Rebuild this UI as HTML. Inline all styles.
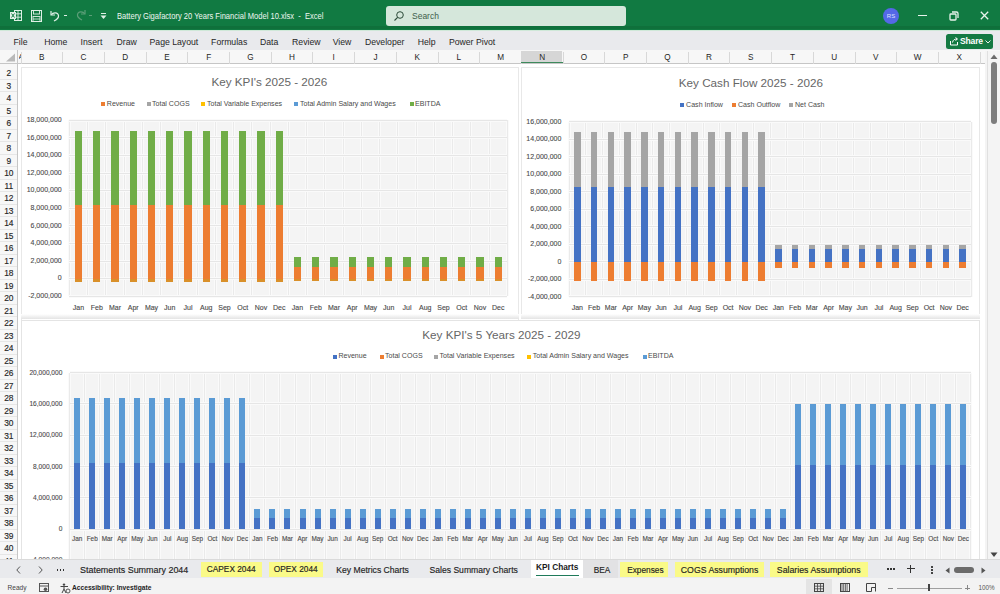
<!DOCTYPE html><html><head><meta charset="utf-8"><style>
html,body{margin:0;padding:0;width:1000px;height:594px;overflow:hidden;background:#fff;font-family:"Liberation Sans", sans-serif;}
div{box-sizing:border-box}
</style></head><body><div style="position:relative;width:1000px;height:594px;overflow:hidden">
<div style="position:absolute;left:0.00px;top:0.00px;width:1000.00px;height:30.50px;background:#117a42"></div>
<div style="position:absolute;left:0.00px;top:26.30px;width:1000.00px;height:2.70px;background:#0f703b"></div>
<div style="position:absolute;left:0.00px;top:29.80px;width:1000.00px;height:1.00px;background:#cfe8d8"></div>
<svg style="position:absolute;left:10px;top:10px" width="12" height="11" viewBox="0 0 12 11">
<rect x="4.5" y="0.5" width="7" height="10" fill="none" stroke="#dff0e6" stroke-width="1"/>
<line x1="8" y1="0.5" x2="8" y2="10.5" stroke="#dff0e6" stroke-width="0.9"/>
<line x1="4.5" y1="3.8" x2="11.5" y2="3.8" stroke="#dff0e6" stroke-width="0.9"/>
<line x1="4.5" y1="7.2" x2="11.5" y2="7.2" stroke="#dff0e6" stroke-width="0.9"/>
<rect x="0" y="2" width="6" height="7" fill="#dff0e6"/>
<path d="M1.5 3.5 L4.5 7.5 M4.5 3.5 L1.5 7.5" stroke="#117a42" stroke-width="1"/>
</svg>
<svg style="position:absolute;left:31px;top:10px" width="11" height="12" viewBox="0 0 11 12">
<rect x="0.5" y="0.5" width="10" height="11" fill="none" stroke="#dff0e6" stroke-width="1"/>
<rect x="2.5" y="0.5" width="6" height="3.5" fill="none" stroke="#dff0e6" stroke-width="0.9"/>
<rect x="2" y="6.5" width="7" height="5" fill="none" stroke="#dff0e6" stroke-width="0.9"/>
<line x1="2" y1="9" x2="9" y2="9" stroke="#dff0e6" stroke-width="0.8"/>
</svg>
<svg style="position:absolute;left:48px;top:9px" width="14" height="14" viewBox="0 0 14 14">
<path d="M3 2 L3 6 L7 6" fill="none" stroke="#dff0e6" stroke-width="1.2"/>
<path d="M3.3 5.8 C5 3 10 3 10.5 6.5 C11 9.5 8 11 6 12" fill="none" stroke="#dff0e6" stroke-width="1.2"/>
</svg>
<div style="position:absolute;left:64.00px;top:15.00px;width:3.00px;height:1.00px;background:#dff0e6"></div>
<svg style="position:absolute;left:74px;top:8px" width="14" height="14" viewBox="0 0 14 14">
<path d="M11 2 L11 6 L7 6" fill="none" stroke="#5c9e78" stroke-width="1.2"/>
<path d="M10.7 5.8 C9 3 4 3 3.5 6.5 C3 9.5 6 11 8 12" fill="none" stroke="#5c9e78" stroke-width="1.2"/>
</svg>
<div style="position:absolute;left:89.00px;top:15.00px;width:3.00px;height:1.00px;background:#5c9e78"></div>
<div style="position:absolute;left:101.00px;top:13.00px;width:5.00px;height:1.00px;background:#dff0e6"></div>
<svg style="position:absolute;left:100px;top:15px" width="7" height="5"><path d="M0.5 0.5 L6.5 0.5 L3.5 4 Z" fill="#dff0e6"/></svg>
<div style="position:absolute;left:117.00px;top:10.76px;height:10.08px;line-height:10.08px;font-size:8.4px;color:#eef7f1;white-space:nowrap;transform-origin:0 50%;transform:scaleX(0.903)">Battery Gigafactory 20 Years Financial Model 10.xlsx&nbsp; - &nbsp;Excel</div>
<div style="position:absolute;left:385.50px;top:6.00px;width:240.00px;height:20.30px;background:#d5e7db;border-radius:3px"></div>
<svg style="position:absolute;left:393px;top:10px" width="12" height="12" viewBox="0 0 12 12">
<circle cx="7" cy="5" r="3.3" fill="none" stroke="#2b4a38" stroke-width="1"/>
<line x1="4.6" y1="7.4" x2="1.5" y2="10.5" stroke="#2b4a38" stroke-width="1.1"/>
</svg>
<div style="position:absolute;left:412.00px;top:10.90px;height:10.20px;line-height:10.20px;font-size:8.5px;color:#3f5f4c;white-space:nowrap;">Search</div>
<div style="position:absolute;left:883px;top:7.5px;width:16px;height:16px;border-radius:50%;background:#5468e8;color:#dfe4ff;font-size:6px;line-height:16px;text-align:center">RS</div>
<div style="position:absolute;left:918.00px;top:14.60px;width:9.00px;height:1.40px;background:#e8f3ec"></div>
<svg style="position:absolute;left:948.5px;top:10.5px" width="10" height="10" viewBox="0 0 10 10">
<rect x="1" y="3" width="6" height="6" rx="0.8" fill="none" stroke="#e8f3ec" stroke-width="1.3"/>
<path d="M3 1 L7.5 1 Q9 1 9 2.5 L9 7" fill="none" stroke="#e8f3ec" stroke-width="1.3"/>
</svg>
<svg style="position:absolute;left:980px;top:11px" width="9" height="9" viewBox="0 0 9 9">
<path d="M0.8 0.8 L8.2 8.2 M8.2 0.8 L0.8 8.2" stroke="#e8f3ec" stroke-width="1.3"/>
</svg>
<div style="position:absolute;left:0.00px;top:30.50px;width:1000.00px;height:19.00px;background:#e9eaed"></div>
<div style="position:absolute;left:13.50px;top:37.18px;height:10.44px;line-height:10.44px;font-size:8.7px;color:#262626;white-space:nowrap;">File</div>
<div style="position:absolute;left:44.20px;top:37.18px;height:10.44px;line-height:10.44px;font-size:8.7px;color:#262626;white-space:nowrap;">Home</div>
<div style="position:absolute;left:80.60px;top:37.18px;height:10.44px;line-height:10.44px;font-size:8.7px;color:#262626;white-space:nowrap;">Insert</div>
<div style="position:absolute;left:116.50px;top:37.18px;height:10.44px;line-height:10.44px;font-size:8.7px;color:#262626;white-space:nowrap;">Draw</div>
<div style="position:absolute;left:149.50px;top:37.18px;height:10.44px;line-height:10.44px;font-size:8.7px;color:#262626;white-space:nowrap;">Page Layout</div>
<div style="position:absolute;left:211.10px;top:37.18px;height:10.44px;line-height:10.44px;font-size:8.7px;color:#262626;white-space:nowrap;">Formulas</div>
<div style="position:absolute;left:259.90px;top:37.18px;height:10.44px;line-height:10.44px;font-size:8.7px;color:#262626;white-space:nowrap;">Data</div>
<div style="position:absolute;left:292.10px;top:37.18px;height:10.44px;line-height:10.44px;font-size:8.7px;color:#262626;white-space:nowrap;">Review</div>
<div style="position:absolute;left:332.70px;top:37.18px;height:10.44px;line-height:10.44px;font-size:8.7px;color:#262626;white-space:nowrap;">View</div>
<div style="position:absolute;left:364.90px;top:37.18px;height:10.44px;line-height:10.44px;font-size:8.7px;color:#262626;white-space:nowrap;">Developer</div>
<div style="position:absolute;left:417.70px;top:37.18px;height:10.44px;line-height:10.44px;font-size:8.7px;color:#262626;white-space:nowrap;">Help</div>
<div style="position:absolute;left:448.90px;top:37.18px;height:10.44px;line-height:10.44px;font-size:8.7px;color:#262626;white-space:nowrap;">Power Pivot</div>
<div style="position:absolute;left:946.00px;top:33.50px;width:46.50px;height:15.00px;background:#147a43;border-radius:2.5px"></div>
<svg style="position:absolute;left:949px;top:36px" width="10" height="10" viewBox="0 0 10 10">
<path d="M1.5 5 L1.5 9 L8.5 9 L8.5 6" fill="none" stroke="#fff" stroke-width="1"/>
<path d="M3.5 6.5 C4 3.5 6 3 8 3 M6.5 1.5 L8.5 3 L6.5 4.5" fill="none" stroke="#fff" stroke-width="1"/>
</svg>
<div style="position:absolute;left:960.00px;top:36.34px;height:10.32px;line-height:10.32px;font-size:8.6px;color:#ffffff;white-space:nowrap;font-weight:600;letter-spacing:-0.2px">Share</div>
<svg style="position:absolute;left:985px;top:40px" width="6" height="4"><path d="M0.5 0.5 L3 3 L5.5 0.5" fill="none" stroke="#fff" stroke-width="0.9"/></svg>
<div style="position:absolute;left:0.00px;top:49.50px;width:1000.00px;height:14.00px;background:#f7f7f7"></div>
<div style="position:absolute;left:0.00px;top:62.70px;width:985.00px;height:1.00px;background:#c6c6c6"></div>
<svg style="position:absolute;left:5px;top:53px" width="11" height="9"><path d="M10 0.5 L10 8.5 L1 8.5 Z" fill="#b9b9b9"/></svg>
<div style="position:absolute;left:17.20px;top:49.50px;width:1.00px;height:16.00px;background:#c6c6c6"></div>
<div style="position:absolute;left:18.50px;top:52.20px;height:9.60px;line-height:9.60px;font-size:8px;color:#333;white-space:nowrap;overflow:hidden;width:2.5px">A</div>
<div style="position:absolute;left:62.20px;top:51.50px;width:1.00px;height:12.00px;background:#d8d8d8"></div>
<div style="position:absolute;left:41.85px;top:53.08px;height:9.84px;line-height:9.84px;font-size:8.2px;color:#262626;white-space:nowrap;transform:translateX(-50%);">B</div>
<div style="position:absolute;left:103.90px;top:51.50px;width:1.00px;height:12.00px;background:#d8d8d8"></div>
<div style="position:absolute;left:83.55px;top:53.08px;height:9.84px;line-height:9.84px;font-size:8.2px;color:#262626;white-space:nowrap;transform:translateX(-50%);">C</div>
<div style="position:absolute;left:145.60px;top:51.50px;width:1.00px;height:12.00px;background:#d8d8d8"></div>
<div style="position:absolute;left:125.25px;top:53.08px;height:9.84px;line-height:9.84px;font-size:8.2px;color:#262626;white-space:nowrap;transform:translateX(-50%);">D</div>
<div style="position:absolute;left:187.30px;top:51.50px;width:1.00px;height:12.00px;background:#d8d8d8"></div>
<div style="position:absolute;left:166.95px;top:53.08px;height:9.84px;line-height:9.84px;font-size:8.2px;color:#262626;white-space:nowrap;transform:translateX(-50%);">E</div>
<div style="position:absolute;left:229.00px;top:51.50px;width:1.00px;height:12.00px;background:#d8d8d8"></div>
<div style="position:absolute;left:208.65px;top:53.08px;height:9.84px;line-height:9.84px;font-size:8.2px;color:#262626;white-space:nowrap;transform:translateX(-50%);">F</div>
<div style="position:absolute;left:270.70px;top:51.50px;width:1.00px;height:12.00px;background:#d8d8d8"></div>
<div style="position:absolute;left:250.35px;top:53.08px;height:9.84px;line-height:9.84px;font-size:8.2px;color:#262626;white-space:nowrap;transform:translateX(-50%);">G</div>
<div style="position:absolute;left:312.40px;top:51.50px;width:1.00px;height:12.00px;background:#d8d8d8"></div>
<div style="position:absolute;left:292.05px;top:53.08px;height:9.84px;line-height:9.84px;font-size:8.2px;color:#262626;white-space:nowrap;transform:translateX(-50%);">H</div>
<div style="position:absolute;left:354.10px;top:51.50px;width:1.00px;height:12.00px;background:#d8d8d8"></div>
<div style="position:absolute;left:333.75px;top:53.08px;height:9.84px;line-height:9.84px;font-size:8.2px;color:#262626;white-space:nowrap;transform:translateX(-50%);">I</div>
<div style="position:absolute;left:395.80px;top:51.50px;width:1.00px;height:12.00px;background:#d8d8d8"></div>
<div style="position:absolute;left:375.45px;top:53.08px;height:9.84px;line-height:9.84px;font-size:8.2px;color:#262626;white-space:nowrap;transform:translateX(-50%);">J</div>
<div style="position:absolute;left:437.50px;top:51.50px;width:1.00px;height:12.00px;background:#d8d8d8"></div>
<div style="position:absolute;left:417.15px;top:53.08px;height:9.84px;line-height:9.84px;font-size:8.2px;color:#262626;white-space:nowrap;transform:translateX(-50%);">K</div>
<div style="position:absolute;left:479.20px;top:51.50px;width:1.00px;height:12.00px;background:#d8d8d8"></div>
<div style="position:absolute;left:458.85px;top:53.08px;height:9.84px;line-height:9.84px;font-size:8.2px;color:#262626;white-space:nowrap;transform:translateX(-50%);">L</div>
<div style="position:absolute;left:520.90px;top:51.50px;width:1.00px;height:12.00px;background:#d8d8d8"></div>
<div style="position:absolute;left:500.55px;top:53.08px;height:9.84px;line-height:9.84px;font-size:8.2px;color:#262626;white-space:nowrap;transform:translateX(-50%);">M</div>
<div style="position:absolute;left:521.40px;top:50.80px;width:40.70px;height:12.70px;background:#d6d6d6"></div>
<div style="position:absolute;left:521.40px;top:61.70px;width:41.70px;height:1.60px;background:#3d8a5c"></div>
<div style="position:absolute;left:562.60px;top:51.50px;width:1.00px;height:12.00px;background:#d8d8d8"></div>
<div style="position:absolute;left:542.25px;top:53.08px;height:9.84px;line-height:9.84px;font-size:8.2px;color:#262626;white-space:nowrap;transform:translateX(-50%);">N</div>
<div style="position:absolute;left:604.30px;top:51.50px;width:1.00px;height:12.00px;background:#d8d8d8"></div>
<div style="position:absolute;left:583.95px;top:53.08px;height:9.84px;line-height:9.84px;font-size:8.2px;color:#262626;white-space:nowrap;transform:translateX(-50%);">O</div>
<div style="position:absolute;left:646.00px;top:51.50px;width:1.00px;height:12.00px;background:#d8d8d8"></div>
<div style="position:absolute;left:625.65px;top:53.08px;height:9.84px;line-height:9.84px;font-size:8.2px;color:#262626;white-space:nowrap;transform:translateX(-50%);">P</div>
<div style="position:absolute;left:687.70px;top:51.50px;width:1.00px;height:12.00px;background:#d8d8d8"></div>
<div style="position:absolute;left:667.35px;top:53.08px;height:9.84px;line-height:9.84px;font-size:8.2px;color:#262626;white-space:nowrap;transform:translateX(-50%);">Q</div>
<div style="position:absolute;left:729.40px;top:51.50px;width:1.00px;height:12.00px;background:#d8d8d8"></div>
<div style="position:absolute;left:709.05px;top:53.08px;height:9.84px;line-height:9.84px;font-size:8.2px;color:#262626;white-space:nowrap;transform:translateX(-50%);">R</div>
<div style="position:absolute;left:771.10px;top:51.50px;width:1.00px;height:12.00px;background:#d8d8d8"></div>
<div style="position:absolute;left:750.75px;top:53.08px;height:9.84px;line-height:9.84px;font-size:8.2px;color:#262626;white-space:nowrap;transform:translateX(-50%);">S</div>
<div style="position:absolute;left:812.80px;top:51.50px;width:1.00px;height:12.00px;background:#d8d8d8"></div>
<div style="position:absolute;left:792.45px;top:53.08px;height:9.84px;line-height:9.84px;font-size:8.2px;color:#262626;white-space:nowrap;transform:translateX(-50%);">T</div>
<div style="position:absolute;left:854.50px;top:51.50px;width:1.00px;height:12.00px;background:#d8d8d8"></div>
<div style="position:absolute;left:834.15px;top:53.08px;height:9.84px;line-height:9.84px;font-size:8.2px;color:#262626;white-space:nowrap;transform:translateX(-50%);">U</div>
<div style="position:absolute;left:896.20px;top:51.50px;width:1.00px;height:12.00px;background:#d8d8d8"></div>
<div style="position:absolute;left:875.85px;top:53.08px;height:9.84px;line-height:9.84px;font-size:8.2px;color:#262626;white-space:nowrap;transform:translateX(-50%);">V</div>
<div style="position:absolute;left:937.90px;top:51.50px;width:1.00px;height:12.00px;background:#d8d8d8"></div>
<div style="position:absolute;left:917.55px;top:53.08px;height:9.84px;line-height:9.84px;font-size:8.2px;color:#262626;white-space:nowrap;transform:translateX(-50%);">W</div>
<div style="position:absolute;left:979.60px;top:51.50px;width:1.00px;height:12.00px;background:#d8d8d8"></div>
<div style="position:absolute;left:959.25px;top:53.08px;height:9.84px;line-height:9.84px;font-size:8.2px;color:#262626;white-space:nowrap;transform:translateX(-50%);">X</div>
<div style="position:absolute;left:20.50px;top:51.50px;width:0.80px;height:12.00px;background:#d8d8d8"></div>
<div style="position:absolute;left:0.00px;top:63.50px;width:17.50px;height:495.50px;background:#f7f7f7"></div>
<div style="position:absolute;left:17.20px;top:63.50px;width:1.00px;height:495.50px;background:#c6c6c6"></div>
<div style="position:absolute;left:0.00px;top:78.50px;width:17.00px;height:0.80px;background:#e6e6e6"></div>
<div style="position:absolute;left:8.80px;top:68.41px;height:10.08px;line-height:10.08px;font-size:8.4px;color:#262626;white-space:nowrap;transform:translateX(-50%);-webkit-text-stroke:0.15px #262626">2</div>
<div style="position:absolute;left:0.00px;top:91.00px;width:17.00px;height:0.80px;background:#e6e6e6"></div>
<div style="position:absolute;left:8.80px;top:80.91px;height:10.08px;line-height:10.08px;font-size:8.4px;color:#262626;white-space:nowrap;transform:translateX(-50%);-webkit-text-stroke:0.15px #262626">3</div>
<div style="position:absolute;left:0.00px;top:103.50px;width:17.00px;height:0.80px;background:#e6e6e6"></div>
<div style="position:absolute;left:8.80px;top:93.41px;height:10.08px;line-height:10.08px;font-size:8.4px;color:#262626;white-space:nowrap;transform:translateX(-50%);-webkit-text-stroke:0.15px #262626">4</div>
<div style="position:absolute;left:0.00px;top:116.00px;width:17.00px;height:0.80px;background:#e6e6e6"></div>
<div style="position:absolute;left:8.80px;top:105.91px;height:10.08px;line-height:10.08px;font-size:8.4px;color:#262626;white-space:nowrap;transform:translateX(-50%);-webkit-text-stroke:0.15px #262626">5</div>
<div style="position:absolute;left:0.00px;top:128.50px;width:17.00px;height:0.80px;background:#e6e6e6"></div>
<div style="position:absolute;left:8.80px;top:118.41px;height:10.08px;line-height:10.08px;font-size:8.4px;color:#262626;white-space:nowrap;transform:translateX(-50%);-webkit-text-stroke:0.15px #262626">6</div>
<div style="position:absolute;left:0.00px;top:141.00px;width:17.00px;height:0.80px;background:#e6e6e6"></div>
<div style="position:absolute;left:8.80px;top:130.91px;height:10.08px;line-height:10.08px;font-size:8.4px;color:#262626;white-space:nowrap;transform:translateX(-50%);-webkit-text-stroke:0.15px #262626">7</div>
<div style="position:absolute;left:0.00px;top:153.50px;width:17.00px;height:0.80px;background:#e6e6e6"></div>
<div style="position:absolute;left:8.80px;top:143.41px;height:10.08px;line-height:10.08px;font-size:8.4px;color:#262626;white-space:nowrap;transform:translateX(-50%);-webkit-text-stroke:0.15px #262626">8</div>
<div style="position:absolute;left:0.00px;top:166.00px;width:17.00px;height:0.80px;background:#e6e6e6"></div>
<div style="position:absolute;left:8.80px;top:155.91px;height:10.08px;line-height:10.08px;font-size:8.4px;color:#262626;white-space:nowrap;transform:translateX(-50%);-webkit-text-stroke:0.15px #262626">9</div>
<div style="position:absolute;left:0.00px;top:178.50px;width:17.00px;height:0.80px;background:#e6e6e6"></div>
<div style="position:absolute;left:8.80px;top:168.41px;height:10.08px;line-height:10.08px;font-size:8.4px;color:#262626;white-space:nowrap;transform:translateX(-50%);-webkit-text-stroke:0.15px #262626">10</div>
<div style="position:absolute;left:0.00px;top:191.00px;width:17.00px;height:0.80px;background:#e6e6e6"></div>
<div style="position:absolute;left:8.80px;top:180.91px;height:10.08px;line-height:10.08px;font-size:8.4px;color:#262626;white-space:nowrap;transform:translateX(-50%);-webkit-text-stroke:0.15px #262626">11</div>
<div style="position:absolute;left:0.00px;top:203.50px;width:17.00px;height:0.80px;background:#e6e6e6"></div>
<div style="position:absolute;left:8.80px;top:193.41px;height:10.08px;line-height:10.08px;font-size:8.4px;color:#262626;white-space:nowrap;transform:translateX(-50%);-webkit-text-stroke:0.15px #262626">12</div>
<div style="position:absolute;left:0.00px;top:216.00px;width:17.00px;height:0.80px;background:#e6e6e6"></div>
<div style="position:absolute;left:8.80px;top:205.91px;height:10.08px;line-height:10.08px;font-size:8.4px;color:#262626;white-space:nowrap;transform:translateX(-50%);-webkit-text-stroke:0.15px #262626">13</div>
<div style="position:absolute;left:0.00px;top:228.50px;width:17.00px;height:0.80px;background:#e6e6e6"></div>
<div style="position:absolute;left:8.80px;top:218.41px;height:10.08px;line-height:10.08px;font-size:8.4px;color:#262626;white-space:nowrap;transform:translateX(-50%);-webkit-text-stroke:0.15px #262626">14</div>
<div style="position:absolute;left:0.00px;top:241.00px;width:17.00px;height:0.80px;background:#e6e6e6"></div>
<div style="position:absolute;left:8.80px;top:230.91px;height:10.08px;line-height:10.08px;font-size:8.4px;color:#262626;white-space:nowrap;transform:translateX(-50%);-webkit-text-stroke:0.15px #262626">15</div>
<div style="position:absolute;left:0.00px;top:253.50px;width:17.00px;height:0.80px;background:#e6e6e6"></div>
<div style="position:absolute;left:8.80px;top:243.41px;height:10.08px;line-height:10.08px;font-size:8.4px;color:#262626;white-space:nowrap;transform:translateX(-50%);-webkit-text-stroke:0.15px #262626">16</div>
<div style="position:absolute;left:0.00px;top:266.00px;width:17.00px;height:0.80px;background:#e6e6e6"></div>
<div style="position:absolute;left:8.80px;top:255.91px;height:10.08px;line-height:10.08px;font-size:8.4px;color:#262626;white-space:nowrap;transform:translateX(-50%);-webkit-text-stroke:0.15px #262626">17</div>
<div style="position:absolute;left:0.00px;top:278.50px;width:17.00px;height:0.80px;background:#e6e6e6"></div>
<div style="position:absolute;left:8.80px;top:268.41px;height:10.08px;line-height:10.08px;font-size:8.4px;color:#262626;white-space:nowrap;transform:translateX(-50%);-webkit-text-stroke:0.15px #262626">18</div>
<div style="position:absolute;left:0.00px;top:291.00px;width:17.00px;height:0.80px;background:#e6e6e6"></div>
<div style="position:absolute;left:8.80px;top:280.91px;height:10.08px;line-height:10.08px;font-size:8.4px;color:#262626;white-space:nowrap;transform:translateX(-50%);-webkit-text-stroke:0.15px #262626">19</div>
<div style="position:absolute;left:0.00px;top:303.50px;width:17.00px;height:0.80px;background:#e6e6e6"></div>
<div style="position:absolute;left:8.80px;top:293.41px;height:10.08px;line-height:10.08px;font-size:8.4px;color:#262626;white-space:nowrap;transform:translateX(-50%);-webkit-text-stroke:0.15px #262626">20</div>
<div style="position:absolute;left:0.00px;top:316.00px;width:17.00px;height:0.80px;background:#e6e6e6"></div>
<div style="position:absolute;left:8.80px;top:305.91px;height:10.08px;line-height:10.08px;font-size:8.4px;color:#262626;white-space:nowrap;transform:translateX(-50%);-webkit-text-stroke:0.15px #262626">21</div>
<div style="position:absolute;left:0.00px;top:328.50px;width:17.00px;height:0.80px;background:#e6e6e6"></div>
<div style="position:absolute;left:8.80px;top:318.41px;height:10.08px;line-height:10.08px;font-size:8.4px;color:#262626;white-space:nowrap;transform:translateX(-50%);-webkit-text-stroke:0.15px #262626">22</div>
<div style="position:absolute;left:0.00px;top:341.00px;width:17.00px;height:0.80px;background:#e6e6e6"></div>
<div style="position:absolute;left:8.80px;top:330.91px;height:10.08px;line-height:10.08px;font-size:8.4px;color:#262626;white-space:nowrap;transform:translateX(-50%);-webkit-text-stroke:0.15px #262626">23</div>
<div style="position:absolute;left:0.00px;top:353.50px;width:17.00px;height:0.80px;background:#e6e6e6"></div>
<div style="position:absolute;left:8.80px;top:343.41px;height:10.08px;line-height:10.08px;font-size:8.4px;color:#262626;white-space:nowrap;transform:translateX(-50%);-webkit-text-stroke:0.15px #262626">24</div>
<div style="position:absolute;left:0.00px;top:366.00px;width:17.00px;height:0.80px;background:#e6e6e6"></div>
<div style="position:absolute;left:8.80px;top:355.91px;height:10.08px;line-height:10.08px;font-size:8.4px;color:#262626;white-space:nowrap;transform:translateX(-50%);-webkit-text-stroke:0.15px #262626">25</div>
<div style="position:absolute;left:0.00px;top:378.50px;width:17.00px;height:0.80px;background:#e6e6e6"></div>
<div style="position:absolute;left:8.80px;top:368.41px;height:10.08px;line-height:10.08px;font-size:8.4px;color:#262626;white-space:nowrap;transform:translateX(-50%);-webkit-text-stroke:0.15px #262626">26</div>
<div style="position:absolute;left:0.00px;top:391.00px;width:17.00px;height:0.80px;background:#e6e6e6"></div>
<div style="position:absolute;left:8.80px;top:380.91px;height:10.08px;line-height:10.08px;font-size:8.4px;color:#262626;white-space:nowrap;transform:translateX(-50%);-webkit-text-stroke:0.15px #262626">27</div>
<div style="position:absolute;left:0.00px;top:403.50px;width:17.00px;height:0.80px;background:#e6e6e6"></div>
<div style="position:absolute;left:8.80px;top:393.41px;height:10.08px;line-height:10.08px;font-size:8.4px;color:#262626;white-space:nowrap;transform:translateX(-50%);-webkit-text-stroke:0.15px #262626">28</div>
<div style="position:absolute;left:0.00px;top:416.00px;width:17.00px;height:0.80px;background:#e6e6e6"></div>
<div style="position:absolute;left:8.80px;top:405.91px;height:10.08px;line-height:10.08px;font-size:8.4px;color:#262626;white-space:nowrap;transform:translateX(-50%);-webkit-text-stroke:0.15px #262626">29</div>
<div style="position:absolute;left:0.00px;top:428.50px;width:17.00px;height:0.80px;background:#e6e6e6"></div>
<div style="position:absolute;left:8.80px;top:418.41px;height:10.08px;line-height:10.08px;font-size:8.4px;color:#262626;white-space:nowrap;transform:translateX(-50%);-webkit-text-stroke:0.15px #262626">30</div>
<div style="position:absolute;left:0.00px;top:441.00px;width:17.00px;height:0.80px;background:#e6e6e6"></div>
<div style="position:absolute;left:8.80px;top:430.91px;height:10.08px;line-height:10.08px;font-size:8.4px;color:#262626;white-space:nowrap;transform:translateX(-50%);-webkit-text-stroke:0.15px #262626">31</div>
<div style="position:absolute;left:0.00px;top:453.50px;width:17.00px;height:0.80px;background:#e6e6e6"></div>
<div style="position:absolute;left:8.80px;top:443.41px;height:10.08px;line-height:10.08px;font-size:8.4px;color:#262626;white-space:nowrap;transform:translateX(-50%);-webkit-text-stroke:0.15px #262626">32</div>
<div style="position:absolute;left:0.00px;top:466.00px;width:17.00px;height:0.80px;background:#e6e6e6"></div>
<div style="position:absolute;left:8.80px;top:455.91px;height:10.08px;line-height:10.08px;font-size:8.4px;color:#262626;white-space:nowrap;transform:translateX(-50%);-webkit-text-stroke:0.15px #262626">33</div>
<div style="position:absolute;left:0.00px;top:478.50px;width:17.00px;height:0.80px;background:#e6e6e6"></div>
<div style="position:absolute;left:8.80px;top:468.41px;height:10.08px;line-height:10.08px;font-size:8.4px;color:#262626;white-space:nowrap;transform:translateX(-50%);-webkit-text-stroke:0.15px #262626">34</div>
<div style="position:absolute;left:0.00px;top:491.00px;width:17.00px;height:0.80px;background:#e6e6e6"></div>
<div style="position:absolute;left:8.80px;top:480.91px;height:10.08px;line-height:10.08px;font-size:8.4px;color:#262626;white-space:nowrap;transform:translateX(-50%);-webkit-text-stroke:0.15px #262626">35</div>
<div style="position:absolute;left:0.00px;top:503.50px;width:17.00px;height:0.80px;background:#e6e6e6"></div>
<div style="position:absolute;left:8.80px;top:493.41px;height:10.08px;line-height:10.08px;font-size:8.4px;color:#262626;white-space:nowrap;transform:translateX(-50%);-webkit-text-stroke:0.15px #262626">36</div>
<div style="position:absolute;left:0.00px;top:516.00px;width:17.00px;height:0.80px;background:#e6e6e6"></div>
<div style="position:absolute;left:8.80px;top:505.91px;height:10.08px;line-height:10.08px;font-size:8.4px;color:#262626;white-space:nowrap;transform:translateX(-50%);-webkit-text-stroke:0.15px #262626">37</div>
<div style="position:absolute;left:0.00px;top:528.50px;width:17.00px;height:0.80px;background:#e6e6e6"></div>
<div style="position:absolute;left:8.80px;top:518.41px;height:10.08px;line-height:10.08px;font-size:8.4px;color:#262626;white-space:nowrap;transform:translateX(-50%);-webkit-text-stroke:0.15px #262626">38</div>
<div style="position:absolute;left:0.00px;top:541.00px;width:17.00px;height:0.80px;background:#e6e6e6"></div>
<div style="position:absolute;left:8.80px;top:530.91px;height:10.08px;line-height:10.08px;font-size:8.4px;color:#262626;white-space:nowrap;transform:translateX(-50%);-webkit-text-stroke:0.15px #262626">39</div>
<div style="position:absolute;left:0.00px;top:553.50px;width:17.00px;height:0.80px;background:#e6e6e6"></div>
<div style="position:absolute;left:8.80px;top:543.41px;height:10.08px;line-height:10.08px;font-size:8.4px;color:#262626;white-space:nowrap;transform:translateX(-50%);-webkit-text-stroke:0.15px #262626">40</div>
<div style="position:absolute;left:0.00px;top:566.00px;width:17.00px;height:0.80px;background:#e6e6e6"></div>
<div style="position:absolute;left:8.80px;top:555.91px;height:10.08px;line-height:10.08px;font-size:8.4px;color:#262626;white-space:nowrap;transform:translateX(-50%);-webkit-text-stroke:0.15px #262626">41</div>
<div style="position:absolute;left:18.20px;top:63.50px;width:966.80px;height:495.50px;background:#ffffff"></div>
<div style="position:absolute;left:985.00px;top:50.50px;width:15.00px;height:508.50px;background:#f4f4f4"></div>
<div style="position:absolute;left:987.00px;top:50.50px;width:0.80px;height:508.50px;background:#e0e0e0"></div>
<svg style="position:absolute;left:990px;top:54px" width="8" height="6"><path d="M4 0.5 L7.5 5 L0.5 5 Z" fill="#6b6b6b"/></svg>
<div style="position:absolute;left:991.00px;top:61.80px;width:6.20px;height:62.30px;background:#7d7d7d;border-radius:3px"></div>
<svg style="position:absolute;left:990px;top:552px" width="8" height="6"><path d="M0.5 0.5 L7.5 0.5 L4 5 Z" fill="#444"/></svg>
<div style="position:absolute;left:21.00px;top:66.50px;width:497.50px;height:253.00px;background:#fff;border:1px solid #e8e8e8;border-bottom:none"></div>
<div style="position:absolute;left:21.00px;top:314.00px;width:497.50px;height:5.00px;background:linear-gradient(#fff,#e4e4e4)"></div>
<div style="position:absolute;left:269.40px;top:74.88px;height:14.04px;line-height:14.04px;font-size:11.7px;color:#666666;white-space:nowrap;transform:translateX(-50%);">Key KPI's 2025 - 2026</div>
<div style="position:absolute;left:101.00px;top:102.00px;width:4.00px;height:4.00px;background:#ed7d31"></div>
<div style="position:absolute;left:106.80px;top:99.77px;height:8.46px;line-height:8.46px;font-size:7.05px;color:#4a4a4a;white-space:nowrap;">Revenue</div>
<div style="position:absolute;left:146.80px;top:102.00px;width:4.00px;height:4.00px;background:#a5a5a5"></div>
<div style="position:absolute;left:152.00px;top:99.77px;height:8.46px;line-height:8.46px;font-size:7.05px;color:#4a4a4a;white-space:nowrap;">Total COGS</div>
<div style="position:absolute;left:201.40px;top:102.00px;width:4.00px;height:4.00px;background:#ffc000"></div>
<div style="position:absolute;left:207.00px;top:99.77px;height:8.46px;line-height:8.46px;font-size:7.05px;color:#4a4a4a;white-space:nowrap;">Total Variable Expenses</div>
<div style="position:absolute;left:294.20px;top:102.00px;width:4.00px;height:4.00px;background:#5b9bd5"></div>
<div style="position:absolute;left:300.00px;top:99.77px;height:8.46px;line-height:8.46px;font-size:7.05px;color:#4a4a4a;white-space:nowrap;">Total Admin Salary and Wages</div>
<div style="position:absolute;left:410.00px;top:102.00px;width:4.00px;height:4.00px;background:#70ad47"></div>
<div style="position:absolute;left:415.00px;top:99.77px;height:8.46px;line-height:8.46px;font-size:7.05px;color:#4a4a4a;white-space:nowrap;">EBITDA</div>
<div style="position:absolute;left:69.40px;top:120.20px;width:438.00px;height:176.00px;background:#f4f4f4"></div>
<div style="position:absolute;left:67.90px;top:120.20px;width:3.00px;height:176.00px;background:linear-gradient(90deg,#fafafa 0,#fafafa 33%,#eaeaea 33%,#eaeaea 67%,#fafafa 67%)"></div>
<div style="position:absolute;left:86.15px;top:120.20px;width:3.00px;height:176.00px;background:linear-gradient(90deg,#fafafa 0,#fafafa 33%,#eaeaea 33%,#eaeaea 67%,#fafafa 67%)"></div>
<div style="position:absolute;left:104.40px;top:120.20px;width:3.00px;height:176.00px;background:linear-gradient(90deg,#fafafa 0,#fafafa 33%,#eaeaea 33%,#eaeaea 67%,#fafafa 67%)"></div>
<div style="position:absolute;left:122.65px;top:120.20px;width:3.00px;height:176.00px;background:linear-gradient(90deg,#fafafa 0,#fafafa 33%,#eaeaea 33%,#eaeaea 67%,#fafafa 67%)"></div>
<div style="position:absolute;left:140.90px;top:120.20px;width:3.00px;height:176.00px;background:linear-gradient(90deg,#fafafa 0,#fafafa 33%,#eaeaea 33%,#eaeaea 67%,#fafafa 67%)"></div>
<div style="position:absolute;left:159.15px;top:120.20px;width:3.00px;height:176.00px;background:linear-gradient(90deg,#fafafa 0,#fafafa 33%,#eaeaea 33%,#eaeaea 67%,#fafafa 67%)"></div>
<div style="position:absolute;left:177.40px;top:120.20px;width:3.00px;height:176.00px;background:linear-gradient(90deg,#fafafa 0,#fafafa 33%,#eaeaea 33%,#eaeaea 67%,#fafafa 67%)"></div>
<div style="position:absolute;left:195.65px;top:120.20px;width:3.00px;height:176.00px;background:linear-gradient(90deg,#fafafa 0,#fafafa 33%,#eaeaea 33%,#eaeaea 67%,#fafafa 67%)"></div>
<div style="position:absolute;left:213.90px;top:120.20px;width:3.00px;height:176.00px;background:linear-gradient(90deg,#fafafa 0,#fafafa 33%,#eaeaea 33%,#eaeaea 67%,#fafafa 67%)"></div>
<div style="position:absolute;left:232.15px;top:120.20px;width:3.00px;height:176.00px;background:linear-gradient(90deg,#fafafa 0,#fafafa 33%,#eaeaea 33%,#eaeaea 67%,#fafafa 67%)"></div>
<div style="position:absolute;left:250.40px;top:120.20px;width:3.00px;height:176.00px;background:linear-gradient(90deg,#fafafa 0,#fafafa 33%,#eaeaea 33%,#eaeaea 67%,#fafafa 67%)"></div>
<div style="position:absolute;left:268.65px;top:120.20px;width:3.00px;height:176.00px;background:linear-gradient(90deg,#fafafa 0,#fafafa 33%,#eaeaea 33%,#eaeaea 67%,#fafafa 67%)"></div>
<div style="position:absolute;left:286.90px;top:120.20px;width:3.00px;height:176.00px;background:linear-gradient(90deg,#fafafa 0,#fafafa 33%,#eaeaea 33%,#eaeaea 67%,#fafafa 67%)"></div>
<div style="position:absolute;left:305.15px;top:120.20px;width:3.00px;height:176.00px;background:linear-gradient(90deg,#fafafa 0,#fafafa 33%,#eaeaea 33%,#eaeaea 67%,#fafafa 67%)"></div>
<div style="position:absolute;left:323.40px;top:120.20px;width:3.00px;height:176.00px;background:linear-gradient(90deg,#fafafa 0,#fafafa 33%,#eaeaea 33%,#eaeaea 67%,#fafafa 67%)"></div>
<div style="position:absolute;left:341.65px;top:120.20px;width:3.00px;height:176.00px;background:linear-gradient(90deg,#fafafa 0,#fafafa 33%,#eaeaea 33%,#eaeaea 67%,#fafafa 67%)"></div>
<div style="position:absolute;left:359.90px;top:120.20px;width:3.00px;height:176.00px;background:linear-gradient(90deg,#fafafa 0,#fafafa 33%,#eaeaea 33%,#eaeaea 67%,#fafafa 67%)"></div>
<div style="position:absolute;left:378.15px;top:120.20px;width:3.00px;height:176.00px;background:linear-gradient(90deg,#fafafa 0,#fafafa 33%,#eaeaea 33%,#eaeaea 67%,#fafafa 67%)"></div>
<div style="position:absolute;left:396.40px;top:120.20px;width:3.00px;height:176.00px;background:linear-gradient(90deg,#fafafa 0,#fafafa 33%,#eaeaea 33%,#eaeaea 67%,#fafafa 67%)"></div>
<div style="position:absolute;left:414.65px;top:120.20px;width:3.00px;height:176.00px;background:linear-gradient(90deg,#fafafa 0,#fafafa 33%,#eaeaea 33%,#eaeaea 67%,#fafafa 67%)"></div>
<div style="position:absolute;left:432.90px;top:120.20px;width:3.00px;height:176.00px;background:linear-gradient(90deg,#fafafa 0,#fafafa 33%,#eaeaea 33%,#eaeaea 67%,#fafafa 67%)"></div>
<div style="position:absolute;left:451.15px;top:120.20px;width:3.00px;height:176.00px;background:linear-gradient(90deg,#fafafa 0,#fafafa 33%,#eaeaea 33%,#eaeaea 67%,#fafafa 67%)"></div>
<div style="position:absolute;left:469.40px;top:120.20px;width:3.00px;height:176.00px;background:linear-gradient(90deg,#fafafa 0,#fafafa 33%,#eaeaea 33%,#eaeaea 67%,#fafafa 67%)"></div>
<div style="position:absolute;left:487.65px;top:120.20px;width:3.00px;height:176.00px;background:linear-gradient(90deg,#fafafa 0,#fafafa 33%,#eaeaea 33%,#eaeaea 67%,#fafafa 67%)"></div>
<div style="position:absolute;left:505.90px;top:120.20px;width:3.00px;height:176.00px;background:linear-gradient(90deg,#fafafa 0,#fafafa 33%,#eaeaea 33%,#eaeaea 67%,#fafafa 67%)"></div>
<div style="position:absolute;left:69.40px;top:118.70px;width:438.00px;height:3.00px;background:linear-gradient(#fafafa 0,#fafafa 25%,#e6e6e6 25%,#e6e6e6 75%,#fafafa 75%)"></div>
<div style="position:absolute;left:61.70px;top:116.00px;height:8.40px;line-height:8.40px;font-size:7.0px;color:#4a4a4a;white-space:nowrap;transform:translateX(-100%);-webkit-text-stroke:0.1px #4a4a4a">18,000,000</div>
<div style="position:absolute;left:69.40px;top:136.30px;width:438.00px;height:3.00px;background:linear-gradient(#fafafa 0,#fafafa 25%,#e6e6e6 25%,#e6e6e6 75%,#fafafa 75%)"></div>
<div style="position:absolute;left:61.70px;top:133.60px;height:8.40px;line-height:8.40px;font-size:7.0px;color:#4a4a4a;white-space:nowrap;transform:translateX(-100%);-webkit-text-stroke:0.1px #4a4a4a">16,000,000</div>
<div style="position:absolute;left:69.40px;top:153.90px;width:438.00px;height:3.00px;background:linear-gradient(#fafafa 0,#fafafa 25%,#e6e6e6 25%,#e6e6e6 75%,#fafafa 75%)"></div>
<div style="position:absolute;left:61.70px;top:151.20px;height:8.40px;line-height:8.40px;font-size:7.0px;color:#4a4a4a;white-space:nowrap;transform:translateX(-100%);-webkit-text-stroke:0.1px #4a4a4a">14,000,000</div>
<div style="position:absolute;left:69.40px;top:171.50px;width:438.00px;height:3.00px;background:linear-gradient(#fafafa 0,#fafafa 25%,#e6e6e6 25%,#e6e6e6 75%,#fafafa 75%)"></div>
<div style="position:absolute;left:61.70px;top:168.80px;height:8.40px;line-height:8.40px;font-size:7.0px;color:#4a4a4a;white-space:nowrap;transform:translateX(-100%);-webkit-text-stroke:0.1px #4a4a4a">12,000,000</div>
<div style="position:absolute;left:69.40px;top:189.10px;width:438.00px;height:3.00px;background:linear-gradient(#fafafa 0,#fafafa 25%,#e6e6e6 25%,#e6e6e6 75%,#fafafa 75%)"></div>
<div style="position:absolute;left:61.70px;top:186.40px;height:8.40px;line-height:8.40px;font-size:7.0px;color:#4a4a4a;white-space:nowrap;transform:translateX(-100%);-webkit-text-stroke:0.1px #4a4a4a">10,000,000</div>
<div style="position:absolute;left:69.40px;top:206.70px;width:438.00px;height:3.00px;background:linear-gradient(#fafafa 0,#fafafa 25%,#e6e6e6 25%,#e6e6e6 75%,#fafafa 75%)"></div>
<div style="position:absolute;left:61.70px;top:204.00px;height:8.40px;line-height:8.40px;font-size:7.0px;color:#4a4a4a;white-space:nowrap;transform:translateX(-100%);-webkit-text-stroke:0.1px #4a4a4a">8,000,000</div>
<div style="position:absolute;left:69.40px;top:224.30px;width:438.00px;height:3.00px;background:linear-gradient(#fafafa 0,#fafafa 25%,#e6e6e6 25%,#e6e6e6 75%,#fafafa 75%)"></div>
<div style="position:absolute;left:61.70px;top:221.60px;height:8.40px;line-height:8.40px;font-size:7.0px;color:#4a4a4a;white-space:nowrap;transform:translateX(-100%);-webkit-text-stroke:0.1px #4a4a4a">6,000,000</div>
<div style="position:absolute;left:69.40px;top:241.90px;width:438.00px;height:3.00px;background:linear-gradient(#fafafa 0,#fafafa 25%,#e6e6e6 25%,#e6e6e6 75%,#fafafa 75%)"></div>
<div style="position:absolute;left:61.70px;top:239.20px;height:8.40px;line-height:8.40px;font-size:7.0px;color:#4a4a4a;white-space:nowrap;transform:translateX(-100%);-webkit-text-stroke:0.1px #4a4a4a">4,000,000</div>
<div style="position:absolute;left:69.40px;top:259.50px;width:438.00px;height:3.00px;background:linear-gradient(#fafafa 0,#fafafa 25%,#e6e6e6 25%,#e6e6e6 75%,#fafafa 75%)"></div>
<div style="position:absolute;left:61.70px;top:256.80px;height:8.40px;line-height:8.40px;font-size:7.0px;color:#4a4a4a;white-space:nowrap;transform:translateX(-100%);-webkit-text-stroke:0.1px #4a4a4a">2,000,000</div>
<div style="position:absolute;left:69.40px;top:277.10px;width:438.00px;height:3.00px;background:linear-gradient(#fafafa 0,#fafafa 25%,#e6e6e6 25%,#e6e6e6 75%,#fafafa 75%)"></div>
<div style="position:absolute;left:61.70px;top:274.40px;height:8.40px;line-height:8.40px;font-size:7.0px;color:#4a4a4a;white-space:nowrap;transform:translateX(-100%);-webkit-text-stroke:0.1px #4a4a4a">0</div>
<div style="position:absolute;left:69.40px;top:294.70px;width:438.00px;height:3.00px;background:linear-gradient(#fafafa 0,#fafafa 25%,#e6e6e6 25%,#e6e6e6 75%,#fafafa 75%)"></div>
<div style="position:absolute;left:61.70px;top:292.00px;height:8.40px;line-height:8.40px;font-size:7.0px;color:#4a4a4a;white-space:nowrap;transform:translateX(-100%);-webkit-text-stroke:0.1px #4a4a4a">-2,000,000</div>
<div style="position:absolute;left:74.88px;top:278.60px;width:7.30px;height:3.08px;background:#d9902a"></div>
<div style="position:absolute;left:74.88px;top:204.68px;width:7.30px;height:73.92px;background:#ed7d31"></div>
<div style="position:absolute;left:74.88px;top:131.02px;width:7.30px;height:73.66px;background:#70ad47"></div>
<div style="position:absolute;left:93.12px;top:278.60px;width:7.30px;height:3.08px;background:#d9902a"></div>
<div style="position:absolute;left:93.12px;top:204.68px;width:7.30px;height:73.92px;background:#ed7d31"></div>
<div style="position:absolute;left:93.12px;top:131.02px;width:7.30px;height:73.66px;background:#70ad47"></div>
<div style="position:absolute;left:111.38px;top:278.60px;width:7.30px;height:3.08px;background:#d9902a"></div>
<div style="position:absolute;left:111.38px;top:204.68px;width:7.30px;height:73.92px;background:#ed7d31"></div>
<div style="position:absolute;left:111.38px;top:131.02px;width:7.30px;height:73.66px;background:#70ad47"></div>
<div style="position:absolute;left:129.62px;top:278.60px;width:7.30px;height:3.08px;background:#d9902a"></div>
<div style="position:absolute;left:129.62px;top:204.68px;width:7.30px;height:73.92px;background:#ed7d31"></div>
<div style="position:absolute;left:129.62px;top:131.02px;width:7.30px;height:73.66px;background:#70ad47"></div>
<div style="position:absolute;left:147.88px;top:278.60px;width:7.30px;height:3.08px;background:#d9902a"></div>
<div style="position:absolute;left:147.88px;top:204.68px;width:7.30px;height:73.92px;background:#ed7d31"></div>
<div style="position:absolute;left:147.88px;top:131.02px;width:7.30px;height:73.66px;background:#70ad47"></div>
<div style="position:absolute;left:166.12px;top:278.60px;width:7.30px;height:3.08px;background:#d9902a"></div>
<div style="position:absolute;left:166.12px;top:204.68px;width:7.30px;height:73.92px;background:#ed7d31"></div>
<div style="position:absolute;left:166.12px;top:131.02px;width:7.30px;height:73.66px;background:#70ad47"></div>
<div style="position:absolute;left:184.38px;top:278.60px;width:7.30px;height:3.08px;background:#d9902a"></div>
<div style="position:absolute;left:184.38px;top:204.68px;width:7.30px;height:73.92px;background:#ed7d31"></div>
<div style="position:absolute;left:184.38px;top:131.02px;width:7.30px;height:73.66px;background:#70ad47"></div>
<div style="position:absolute;left:202.62px;top:278.60px;width:7.30px;height:3.08px;background:#d9902a"></div>
<div style="position:absolute;left:202.62px;top:204.68px;width:7.30px;height:73.92px;background:#ed7d31"></div>
<div style="position:absolute;left:202.62px;top:131.02px;width:7.30px;height:73.66px;background:#70ad47"></div>
<div style="position:absolute;left:220.88px;top:278.60px;width:7.30px;height:3.08px;background:#d9902a"></div>
<div style="position:absolute;left:220.88px;top:204.68px;width:7.30px;height:73.92px;background:#ed7d31"></div>
<div style="position:absolute;left:220.88px;top:131.02px;width:7.30px;height:73.66px;background:#70ad47"></div>
<div style="position:absolute;left:239.12px;top:278.60px;width:7.30px;height:3.08px;background:#d9902a"></div>
<div style="position:absolute;left:239.12px;top:204.68px;width:7.30px;height:73.92px;background:#ed7d31"></div>
<div style="position:absolute;left:239.12px;top:131.02px;width:7.30px;height:73.66px;background:#70ad47"></div>
<div style="position:absolute;left:257.38px;top:278.60px;width:7.30px;height:3.08px;background:#d9902a"></div>
<div style="position:absolute;left:257.38px;top:204.68px;width:7.30px;height:73.92px;background:#ed7d31"></div>
<div style="position:absolute;left:257.38px;top:131.02px;width:7.30px;height:73.66px;background:#70ad47"></div>
<div style="position:absolute;left:275.62px;top:278.60px;width:7.30px;height:3.08px;background:#d9902a"></div>
<div style="position:absolute;left:275.62px;top:204.68px;width:7.30px;height:73.92px;background:#ed7d31"></div>
<div style="position:absolute;left:275.62px;top:131.02px;width:7.30px;height:73.66px;background:#70ad47"></div>
<div style="position:absolute;left:293.88px;top:278.60px;width:7.30px;height:2.64px;background:#d9902a"></div>
<div style="position:absolute;left:293.88px;top:266.72px;width:7.30px;height:11.88px;background:#ed7d31"></div>
<div style="position:absolute;left:293.88px;top:257.30px;width:7.30px;height:9.42px;background:#70ad47"></div>
<div style="position:absolute;left:312.12px;top:278.60px;width:7.30px;height:2.64px;background:#d9902a"></div>
<div style="position:absolute;left:312.12px;top:266.72px;width:7.30px;height:11.88px;background:#ed7d31"></div>
<div style="position:absolute;left:312.12px;top:257.30px;width:7.30px;height:9.42px;background:#70ad47"></div>
<div style="position:absolute;left:330.38px;top:278.60px;width:7.30px;height:2.64px;background:#d9902a"></div>
<div style="position:absolute;left:330.38px;top:266.72px;width:7.30px;height:11.88px;background:#ed7d31"></div>
<div style="position:absolute;left:330.38px;top:257.30px;width:7.30px;height:9.42px;background:#70ad47"></div>
<div style="position:absolute;left:348.62px;top:278.60px;width:7.30px;height:2.64px;background:#d9902a"></div>
<div style="position:absolute;left:348.62px;top:266.72px;width:7.30px;height:11.88px;background:#ed7d31"></div>
<div style="position:absolute;left:348.62px;top:257.30px;width:7.30px;height:9.42px;background:#70ad47"></div>
<div style="position:absolute;left:366.88px;top:278.60px;width:7.30px;height:2.64px;background:#d9902a"></div>
<div style="position:absolute;left:366.88px;top:266.72px;width:7.30px;height:11.88px;background:#ed7d31"></div>
<div style="position:absolute;left:366.88px;top:257.30px;width:7.30px;height:9.42px;background:#70ad47"></div>
<div style="position:absolute;left:385.12px;top:278.60px;width:7.30px;height:2.64px;background:#d9902a"></div>
<div style="position:absolute;left:385.12px;top:266.72px;width:7.30px;height:11.88px;background:#ed7d31"></div>
<div style="position:absolute;left:385.12px;top:257.30px;width:7.30px;height:9.42px;background:#70ad47"></div>
<div style="position:absolute;left:403.38px;top:278.60px;width:7.30px;height:2.64px;background:#d9902a"></div>
<div style="position:absolute;left:403.38px;top:266.72px;width:7.30px;height:11.88px;background:#ed7d31"></div>
<div style="position:absolute;left:403.38px;top:257.30px;width:7.30px;height:9.42px;background:#70ad47"></div>
<div style="position:absolute;left:421.62px;top:278.60px;width:7.30px;height:2.64px;background:#d9902a"></div>
<div style="position:absolute;left:421.62px;top:266.72px;width:7.30px;height:11.88px;background:#ed7d31"></div>
<div style="position:absolute;left:421.62px;top:257.30px;width:7.30px;height:9.42px;background:#70ad47"></div>
<div style="position:absolute;left:439.88px;top:278.60px;width:7.30px;height:2.64px;background:#d9902a"></div>
<div style="position:absolute;left:439.88px;top:266.72px;width:7.30px;height:11.88px;background:#ed7d31"></div>
<div style="position:absolute;left:439.88px;top:257.30px;width:7.30px;height:9.42px;background:#70ad47"></div>
<div style="position:absolute;left:458.12px;top:278.60px;width:7.30px;height:2.64px;background:#d9902a"></div>
<div style="position:absolute;left:458.12px;top:266.72px;width:7.30px;height:11.88px;background:#ed7d31"></div>
<div style="position:absolute;left:458.12px;top:257.30px;width:7.30px;height:9.42px;background:#70ad47"></div>
<div style="position:absolute;left:476.38px;top:278.60px;width:7.30px;height:2.64px;background:#d9902a"></div>
<div style="position:absolute;left:476.38px;top:266.72px;width:7.30px;height:11.88px;background:#ed7d31"></div>
<div style="position:absolute;left:476.38px;top:257.30px;width:7.30px;height:9.42px;background:#70ad47"></div>
<div style="position:absolute;left:494.62px;top:278.60px;width:7.30px;height:2.64px;background:#d9902a"></div>
<div style="position:absolute;left:494.62px;top:266.72px;width:7.30px;height:11.88px;background:#ed7d31"></div>
<div style="position:absolute;left:494.62px;top:257.30px;width:7.30px;height:9.42px;background:#70ad47"></div>
<div style="position:absolute;left:78.53px;top:303.80px;height:8.40px;line-height:8.40px;font-size:7.0px;color:#4a4a4a;white-space:nowrap;transform:translateX(-50%);-webkit-text-stroke:0.12px #4a4a4a">Jan</div>
<div style="position:absolute;left:96.78px;top:303.80px;height:8.40px;line-height:8.40px;font-size:7.0px;color:#4a4a4a;white-space:nowrap;transform:translateX(-50%);-webkit-text-stroke:0.12px #4a4a4a">Feb</div>
<div style="position:absolute;left:115.03px;top:303.80px;height:8.40px;line-height:8.40px;font-size:7.0px;color:#4a4a4a;white-space:nowrap;transform:translateX(-50%);-webkit-text-stroke:0.12px #4a4a4a">Mar</div>
<div style="position:absolute;left:133.28px;top:303.80px;height:8.40px;line-height:8.40px;font-size:7.0px;color:#4a4a4a;white-space:nowrap;transform:translateX(-50%);-webkit-text-stroke:0.12px #4a4a4a">Apr</div>
<div style="position:absolute;left:151.53px;top:303.80px;height:8.40px;line-height:8.40px;font-size:7.0px;color:#4a4a4a;white-space:nowrap;transform:translateX(-50%);-webkit-text-stroke:0.12px #4a4a4a">May</div>
<div style="position:absolute;left:169.78px;top:303.80px;height:8.40px;line-height:8.40px;font-size:7.0px;color:#4a4a4a;white-space:nowrap;transform:translateX(-50%);-webkit-text-stroke:0.12px #4a4a4a">Jun</div>
<div style="position:absolute;left:188.03px;top:303.80px;height:8.40px;line-height:8.40px;font-size:7.0px;color:#4a4a4a;white-space:nowrap;transform:translateX(-50%);-webkit-text-stroke:0.12px #4a4a4a">Jul</div>
<div style="position:absolute;left:206.28px;top:303.80px;height:8.40px;line-height:8.40px;font-size:7.0px;color:#4a4a4a;white-space:nowrap;transform:translateX(-50%);-webkit-text-stroke:0.12px #4a4a4a">Aug</div>
<div style="position:absolute;left:224.53px;top:303.80px;height:8.40px;line-height:8.40px;font-size:7.0px;color:#4a4a4a;white-space:nowrap;transform:translateX(-50%);-webkit-text-stroke:0.12px #4a4a4a">Sep</div>
<div style="position:absolute;left:242.78px;top:303.80px;height:8.40px;line-height:8.40px;font-size:7.0px;color:#4a4a4a;white-space:nowrap;transform:translateX(-50%);-webkit-text-stroke:0.12px #4a4a4a">Oct</div>
<div style="position:absolute;left:261.02px;top:303.80px;height:8.40px;line-height:8.40px;font-size:7.0px;color:#4a4a4a;white-space:nowrap;transform:translateX(-50%);-webkit-text-stroke:0.12px #4a4a4a">Nov</div>
<div style="position:absolute;left:279.27px;top:303.80px;height:8.40px;line-height:8.40px;font-size:7.0px;color:#4a4a4a;white-space:nowrap;transform:translateX(-50%);-webkit-text-stroke:0.12px #4a4a4a">Dec</div>
<div style="position:absolute;left:297.52px;top:303.80px;height:8.40px;line-height:8.40px;font-size:7.0px;color:#4a4a4a;white-space:nowrap;transform:translateX(-50%);-webkit-text-stroke:0.12px #4a4a4a">Jan</div>
<div style="position:absolute;left:315.77px;top:303.80px;height:8.40px;line-height:8.40px;font-size:7.0px;color:#4a4a4a;white-space:nowrap;transform:translateX(-50%);-webkit-text-stroke:0.12px #4a4a4a">Feb</div>
<div style="position:absolute;left:334.02px;top:303.80px;height:8.40px;line-height:8.40px;font-size:7.0px;color:#4a4a4a;white-space:nowrap;transform:translateX(-50%);-webkit-text-stroke:0.12px #4a4a4a">Mar</div>
<div style="position:absolute;left:352.27px;top:303.80px;height:8.40px;line-height:8.40px;font-size:7.0px;color:#4a4a4a;white-space:nowrap;transform:translateX(-50%);-webkit-text-stroke:0.12px #4a4a4a">Apr</div>
<div style="position:absolute;left:370.52px;top:303.80px;height:8.40px;line-height:8.40px;font-size:7.0px;color:#4a4a4a;white-space:nowrap;transform:translateX(-50%);-webkit-text-stroke:0.12px #4a4a4a">May</div>
<div style="position:absolute;left:388.77px;top:303.80px;height:8.40px;line-height:8.40px;font-size:7.0px;color:#4a4a4a;white-space:nowrap;transform:translateX(-50%);-webkit-text-stroke:0.12px #4a4a4a">Jun</div>
<div style="position:absolute;left:407.02px;top:303.80px;height:8.40px;line-height:8.40px;font-size:7.0px;color:#4a4a4a;white-space:nowrap;transform:translateX(-50%);-webkit-text-stroke:0.12px #4a4a4a">Jul</div>
<div style="position:absolute;left:425.27px;top:303.80px;height:8.40px;line-height:8.40px;font-size:7.0px;color:#4a4a4a;white-space:nowrap;transform:translateX(-50%);-webkit-text-stroke:0.12px #4a4a4a">Aug</div>
<div style="position:absolute;left:443.52px;top:303.80px;height:8.40px;line-height:8.40px;font-size:7.0px;color:#4a4a4a;white-space:nowrap;transform:translateX(-50%);-webkit-text-stroke:0.12px #4a4a4a">Sep</div>
<div style="position:absolute;left:461.77px;top:303.80px;height:8.40px;line-height:8.40px;font-size:7.0px;color:#4a4a4a;white-space:nowrap;transform:translateX(-50%);-webkit-text-stroke:0.12px #4a4a4a">Oct</div>
<div style="position:absolute;left:480.02px;top:303.80px;height:8.40px;line-height:8.40px;font-size:7.0px;color:#4a4a4a;white-space:nowrap;transform:translateX(-50%);-webkit-text-stroke:0.12px #4a4a4a">Nov</div>
<div style="position:absolute;left:498.27px;top:303.80px;height:8.40px;line-height:8.40px;font-size:7.0px;color:#4a4a4a;white-space:nowrap;transform:translateX(-50%);-webkit-text-stroke:0.12px #4a4a4a">Dec</div>
<div style="position:absolute;left:521.00px;top:66.50px;width:459.00px;height:252.50px;background:#fff;border:1px solid #e8e8e8;border-bottom:none"></div>
<div style="position:absolute;left:521.00px;top:314.00px;width:459.00px;height:5.00px;background:linear-gradient(#fff,#e4e4e4)"></div>
<div style="position:absolute;left:750.90px;top:75.58px;height:14.04px;line-height:14.04px;font-size:11.7px;color:#666666;white-space:nowrap;transform:translateX(-50%);">Key Cash Flow 2025 - 2026</div>
<div style="position:absolute;left:680.00px;top:102.80px;width:4.00px;height:4.00px;background:#4472c4"></div>
<div style="position:absolute;left:686.10px;top:100.57px;height:8.46px;line-height:8.46px;font-size:7.05px;color:#4a4a4a;white-space:nowrap;">Cash Inflow</div>
<div style="position:absolute;left:731.80px;top:102.80px;width:4.00px;height:4.00px;background:#ed7d31"></div>
<div style="position:absolute;left:738.00px;top:100.57px;height:8.46px;line-height:8.46px;font-size:7.05px;color:#4a4a4a;white-space:nowrap;">Cash Outflow</div>
<div style="position:absolute;left:789.00px;top:102.80px;width:4.00px;height:4.00px;background:#a5a5a5"></div>
<div style="position:absolute;left:795.00px;top:100.57px;height:8.46px;line-height:8.46px;font-size:7.05px;color:#4a4a4a;white-space:nowrap;">Net Cash</div>
<div style="position:absolute;left:569.00px;top:121.80px;width:402.00px;height:175.00px;background:#f4f4f4"></div>
<div style="position:absolute;left:567.50px;top:121.80px;width:3.00px;height:175.00px;background:linear-gradient(90deg,#fafafa 0,#fafafa 33%,#eaeaea 33%,#eaeaea 67%,#fafafa 67%)"></div>
<div style="position:absolute;left:584.25px;top:121.80px;width:3.00px;height:175.00px;background:linear-gradient(90deg,#fafafa 0,#fafafa 33%,#eaeaea 33%,#eaeaea 67%,#fafafa 67%)"></div>
<div style="position:absolute;left:601.00px;top:121.80px;width:3.00px;height:175.00px;background:linear-gradient(90deg,#fafafa 0,#fafafa 33%,#eaeaea 33%,#eaeaea 67%,#fafafa 67%)"></div>
<div style="position:absolute;left:617.75px;top:121.80px;width:3.00px;height:175.00px;background:linear-gradient(90deg,#fafafa 0,#fafafa 33%,#eaeaea 33%,#eaeaea 67%,#fafafa 67%)"></div>
<div style="position:absolute;left:634.50px;top:121.80px;width:3.00px;height:175.00px;background:linear-gradient(90deg,#fafafa 0,#fafafa 33%,#eaeaea 33%,#eaeaea 67%,#fafafa 67%)"></div>
<div style="position:absolute;left:651.25px;top:121.80px;width:3.00px;height:175.00px;background:linear-gradient(90deg,#fafafa 0,#fafafa 33%,#eaeaea 33%,#eaeaea 67%,#fafafa 67%)"></div>
<div style="position:absolute;left:668.00px;top:121.80px;width:3.00px;height:175.00px;background:linear-gradient(90deg,#fafafa 0,#fafafa 33%,#eaeaea 33%,#eaeaea 67%,#fafafa 67%)"></div>
<div style="position:absolute;left:684.75px;top:121.80px;width:3.00px;height:175.00px;background:linear-gradient(90deg,#fafafa 0,#fafafa 33%,#eaeaea 33%,#eaeaea 67%,#fafafa 67%)"></div>
<div style="position:absolute;left:701.50px;top:121.80px;width:3.00px;height:175.00px;background:linear-gradient(90deg,#fafafa 0,#fafafa 33%,#eaeaea 33%,#eaeaea 67%,#fafafa 67%)"></div>
<div style="position:absolute;left:718.25px;top:121.80px;width:3.00px;height:175.00px;background:linear-gradient(90deg,#fafafa 0,#fafafa 33%,#eaeaea 33%,#eaeaea 67%,#fafafa 67%)"></div>
<div style="position:absolute;left:735.00px;top:121.80px;width:3.00px;height:175.00px;background:linear-gradient(90deg,#fafafa 0,#fafafa 33%,#eaeaea 33%,#eaeaea 67%,#fafafa 67%)"></div>
<div style="position:absolute;left:751.75px;top:121.80px;width:3.00px;height:175.00px;background:linear-gradient(90deg,#fafafa 0,#fafafa 33%,#eaeaea 33%,#eaeaea 67%,#fafafa 67%)"></div>
<div style="position:absolute;left:768.50px;top:121.80px;width:3.00px;height:175.00px;background:linear-gradient(90deg,#fafafa 0,#fafafa 33%,#eaeaea 33%,#eaeaea 67%,#fafafa 67%)"></div>
<div style="position:absolute;left:785.25px;top:121.80px;width:3.00px;height:175.00px;background:linear-gradient(90deg,#fafafa 0,#fafafa 33%,#eaeaea 33%,#eaeaea 67%,#fafafa 67%)"></div>
<div style="position:absolute;left:802.00px;top:121.80px;width:3.00px;height:175.00px;background:linear-gradient(90deg,#fafafa 0,#fafafa 33%,#eaeaea 33%,#eaeaea 67%,#fafafa 67%)"></div>
<div style="position:absolute;left:818.75px;top:121.80px;width:3.00px;height:175.00px;background:linear-gradient(90deg,#fafafa 0,#fafafa 33%,#eaeaea 33%,#eaeaea 67%,#fafafa 67%)"></div>
<div style="position:absolute;left:835.50px;top:121.80px;width:3.00px;height:175.00px;background:linear-gradient(90deg,#fafafa 0,#fafafa 33%,#eaeaea 33%,#eaeaea 67%,#fafafa 67%)"></div>
<div style="position:absolute;left:852.25px;top:121.80px;width:3.00px;height:175.00px;background:linear-gradient(90deg,#fafafa 0,#fafafa 33%,#eaeaea 33%,#eaeaea 67%,#fafafa 67%)"></div>
<div style="position:absolute;left:869.00px;top:121.80px;width:3.00px;height:175.00px;background:linear-gradient(90deg,#fafafa 0,#fafafa 33%,#eaeaea 33%,#eaeaea 67%,#fafafa 67%)"></div>
<div style="position:absolute;left:885.75px;top:121.80px;width:3.00px;height:175.00px;background:linear-gradient(90deg,#fafafa 0,#fafafa 33%,#eaeaea 33%,#eaeaea 67%,#fafafa 67%)"></div>
<div style="position:absolute;left:902.50px;top:121.80px;width:3.00px;height:175.00px;background:linear-gradient(90deg,#fafafa 0,#fafafa 33%,#eaeaea 33%,#eaeaea 67%,#fafafa 67%)"></div>
<div style="position:absolute;left:919.25px;top:121.80px;width:3.00px;height:175.00px;background:linear-gradient(90deg,#fafafa 0,#fafafa 33%,#eaeaea 33%,#eaeaea 67%,#fafafa 67%)"></div>
<div style="position:absolute;left:936.00px;top:121.80px;width:3.00px;height:175.00px;background:linear-gradient(90deg,#fafafa 0,#fafafa 33%,#eaeaea 33%,#eaeaea 67%,#fafafa 67%)"></div>
<div style="position:absolute;left:952.75px;top:121.80px;width:3.00px;height:175.00px;background:linear-gradient(90deg,#fafafa 0,#fafafa 33%,#eaeaea 33%,#eaeaea 67%,#fafafa 67%)"></div>
<div style="position:absolute;left:969.50px;top:121.80px;width:3.00px;height:175.00px;background:linear-gradient(90deg,#fafafa 0,#fafafa 33%,#eaeaea 33%,#eaeaea 67%,#fafafa 67%)"></div>
<div style="position:absolute;left:569.00px;top:120.30px;width:402.00px;height:3.00px;background:linear-gradient(#fafafa 0,#fafafa 25%,#e6e6e6 25%,#e6e6e6 75%,#fafafa 75%)"></div>
<div style="position:absolute;left:561.40px;top:117.60px;height:8.40px;line-height:8.40px;font-size:7.0px;color:#4a4a4a;white-space:nowrap;transform:translateX(-100%);-webkit-text-stroke:0.1px #4a4a4a">16,000,000</div>
<div style="position:absolute;left:569.00px;top:137.80px;width:402.00px;height:3.00px;background:linear-gradient(#fafafa 0,#fafafa 25%,#e6e6e6 25%,#e6e6e6 75%,#fafafa 75%)"></div>
<div style="position:absolute;left:561.40px;top:135.10px;height:8.40px;line-height:8.40px;font-size:7.0px;color:#4a4a4a;white-space:nowrap;transform:translateX(-100%);-webkit-text-stroke:0.1px #4a4a4a">14,000,000</div>
<div style="position:absolute;left:569.00px;top:155.30px;width:402.00px;height:3.00px;background:linear-gradient(#fafafa 0,#fafafa 25%,#e6e6e6 25%,#e6e6e6 75%,#fafafa 75%)"></div>
<div style="position:absolute;left:561.40px;top:152.60px;height:8.40px;line-height:8.40px;font-size:7.0px;color:#4a4a4a;white-space:nowrap;transform:translateX(-100%);-webkit-text-stroke:0.1px #4a4a4a">12,000,000</div>
<div style="position:absolute;left:569.00px;top:172.80px;width:402.00px;height:3.00px;background:linear-gradient(#fafafa 0,#fafafa 25%,#e6e6e6 25%,#e6e6e6 75%,#fafafa 75%)"></div>
<div style="position:absolute;left:561.40px;top:170.10px;height:8.40px;line-height:8.40px;font-size:7.0px;color:#4a4a4a;white-space:nowrap;transform:translateX(-100%);-webkit-text-stroke:0.1px #4a4a4a">10,000,000</div>
<div style="position:absolute;left:569.00px;top:190.30px;width:402.00px;height:3.00px;background:linear-gradient(#fafafa 0,#fafafa 25%,#e6e6e6 25%,#e6e6e6 75%,#fafafa 75%)"></div>
<div style="position:absolute;left:561.40px;top:187.60px;height:8.40px;line-height:8.40px;font-size:7.0px;color:#4a4a4a;white-space:nowrap;transform:translateX(-100%);-webkit-text-stroke:0.1px #4a4a4a">8,000,000</div>
<div style="position:absolute;left:569.00px;top:207.80px;width:402.00px;height:3.00px;background:linear-gradient(#fafafa 0,#fafafa 25%,#e6e6e6 25%,#e6e6e6 75%,#fafafa 75%)"></div>
<div style="position:absolute;left:561.40px;top:205.10px;height:8.40px;line-height:8.40px;font-size:7.0px;color:#4a4a4a;white-space:nowrap;transform:translateX(-100%);-webkit-text-stroke:0.1px #4a4a4a">6,000,000</div>
<div style="position:absolute;left:569.00px;top:225.30px;width:402.00px;height:3.00px;background:linear-gradient(#fafafa 0,#fafafa 25%,#e6e6e6 25%,#e6e6e6 75%,#fafafa 75%)"></div>
<div style="position:absolute;left:561.40px;top:222.60px;height:8.40px;line-height:8.40px;font-size:7.0px;color:#4a4a4a;white-space:nowrap;transform:translateX(-100%);-webkit-text-stroke:0.1px #4a4a4a">4,000,000</div>
<div style="position:absolute;left:569.00px;top:242.80px;width:402.00px;height:3.00px;background:linear-gradient(#fafafa 0,#fafafa 25%,#e6e6e6 25%,#e6e6e6 75%,#fafafa 75%)"></div>
<div style="position:absolute;left:561.40px;top:240.10px;height:8.40px;line-height:8.40px;font-size:7.0px;color:#4a4a4a;white-space:nowrap;transform:translateX(-100%);-webkit-text-stroke:0.1px #4a4a4a">2,000,000</div>
<div style="position:absolute;left:569.00px;top:260.30px;width:402.00px;height:3.00px;background:linear-gradient(#fafafa 0,#fafafa 25%,#e6e6e6 25%,#e6e6e6 75%,#fafafa 75%)"></div>
<div style="position:absolute;left:561.40px;top:257.60px;height:8.40px;line-height:8.40px;font-size:7.0px;color:#4a4a4a;white-space:nowrap;transform:translateX(-100%);-webkit-text-stroke:0.1px #4a4a4a">0</div>
<div style="position:absolute;left:569.00px;top:277.80px;width:402.00px;height:3.00px;background:linear-gradient(#fafafa 0,#fafafa 25%,#e6e6e6 25%,#e6e6e6 75%,#fafafa 75%)"></div>
<div style="position:absolute;left:561.40px;top:275.10px;height:8.40px;line-height:8.40px;font-size:7.0px;color:#4a4a4a;white-space:nowrap;transform:translateX(-100%);-webkit-text-stroke:0.1px #4a4a4a">-2,000,000</div>
<div style="position:absolute;left:569.00px;top:295.30px;width:402.00px;height:3.00px;background:linear-gradient(#fafafa 0,#fafafa 25%,#e6e6e6 25%,#e6e6e6 75%,#fafafa 75%)"></div>
<div style="position:absolute;left:561.40px;top:292.60px;height:8.40px;line-height:8.40px;font-size:7.0px;color:#4a4a4a;white-space:nowrap;transform:translateX(-100%);-webkit-text-stroke:0.1px #4a4a4a">-4,000,000</div>
<div style="position:absolute;left:574.02px;top:261.80px;width:6.70px;height:19.25px;background:#ed7d31"></div>
<div style="position:absolute;left:574.02px;top:186.72px;width:6.70px;height:75.08px;background:#4472c4"></div>
<div style="position:absolute;left:574.02px;top:131.95px;width:6.70px;height:54.78px;background:#a5a5a5"></div>
<div style="position:absolute;left:590.77px;top:261.80px;width:6.70px;height:19.25px;background:#ed7d31"></div>
<div style="position:absolute;left:590.77px;top:186.72px;width:6.70px;height:75.08px;background:#4472c4"></div>
<div style="position:absolute;left:590.77px;top:131.95px;width:6.70px;height:54.78px;background:#a5a5a5"></div>
<div style="position:absolute;left:607.52px;top:261.80px;width:6.70px;height:19.25px;background:#ed7d31"></div>
<div style="position:absolute;left:607.52px;top:186.72px;width:6.70px;height:75.08px;background:#4472c4"></div>
<div style="position:absolute;left:607.52px;top:131.95px;width:6.70px;height:54.78px;background:#a5a5a5"></div>
<div style="position:absolute;left:624.27px;top:261.80px;width:6.70px;height:19.25px;background:#ed7d31"></div>
<div style="position:absolute;left:624.27px;top:186.72px;width:6.70px;height:75.08px;background:#4472c4"></div>
<div style="position:absolute;left:624.27px;top:131.95px;width:6.70px;height:54.78px;background:#a5a5a5"></div>
<div style="position:absolute;left:641.02px;top:261.80px;width:6.70px;height:19.25px;background:#ed7d31"></div>
<div style="position:absolute;left:641.02px;top:186.72px;width:6.70px;height:75.08px;background:#4472c4"></div>
<div style="position:absolute;left:641.02px;top:131.95px;width:6.70px;height:54.78px;background:#a5a5a5"></div>
<div style="position:absolute;left:657.77px;top:261.80px;width:6.70px;height:19.25px;background:#ed7d31"></div>
<div style="position:absolute;left:657.77px;top:186.72px;width:6.70px;height:75.08px;background:#4472c4"></div>
<div style="position:absolute;left:657.77px;top:131.95px;width:6.70px;height:54.78px;background:#a5a5a5"></div>
<div style="position:absolute;left:674.52px;top:261.80px;width:6.70px;height:19.25px;background:#ed7d31"></div>
<div style="position:absolute;left:674.52px;top:186.72px;width:6.70px;height:75.08px;background:#4472c4"></div>
<div style="position:absolute;left:674.52px;top:131.95px;width:6.70px;height:54.78px;background:#a5a5a5"></div>
<div style="position:absolute;left:691.27px;top:261.80px;width:6.70px;height:19.25px;background:#ed7d31"></div>
<div style="position:absolute;left:691.27px;top:186.72px;width:6.70px;height:75.08px;background:#4472c4"></div>
<div style="position:absolute;left:691.27px;top:131.95px;width:6.70px;height:54.78px;background:#a5a5a5"></div>
<div style="position:absolute;left:708.02px;top:261.80px;width:6.70px;height:19.25px;background:#ed7d31"></div>
<div style="position:absolute;left:708.02px;top:186.72px;width:6.70px;height:75.08px;background:#4472c4"></div>
<div style="position:absolute;left:708.02px;top:131.95px;width:6.70px;height:54.78px;background:#a5a5a5"></div>
<div style="position:absolute;left:724.77px;top:261.80px;width:6.70px;height:19.25px;background:#ed7d31"></div>
<div style="position:absolute;left:724.77px;top:186.72px;width:6.70px;height:75.08px;background:#4472c4"></div>
<div style="position:absolute;left:724.77px;top:131.95px;width:6.70px;height:54.78px;background:#a5a5a5"></div>
<div style="position:absolute;left:741.52px;top:261.80px;width:6.70px;height:19.25px;background:#ed7d31"></div>
<div style="position:absolute;left:741.52px;top:186.72px;width:6.70px;height:75.08px;background:#4472c4"></div>
<div style="position:absolute;left:741.52px;top:131.95px;width:6.70px;height:54.78px;background:#a5a5a5"></div>
<div style="position:absolute;left:758.27px;top:261.80px;width:6.70px;height:19.25px;background:#ed7d31"></div>
<div style="position:absolute;left:758.27px;top:186.72px;width:6.70px;height:75.08px;background:#4472c4"></div>
<div style="position:absolute;left:758.27px;top:131.95px;width:6.70px;height:54.78px;background:#a5a5a5"></div>
<div style="position:absolute;left:775.02px;top:261.80px;width:6.70px;height:6.65px;background:#ed7d31"></div>
<div style="position:absolute;left:775.02px;top:248.94px;width:6.70px;height:12.86px;background:#4472c4"></div>
<div style="position:absolute;left:775.02px;top:244.74px;width:6.70px;height:4.20px;background:#a5a5a5"></div>
<div style="position:absolute;left:791.77px;top:261.80px;width:6.70px;height:6.65px;background:#ed7d31"></div>
<div style="position:absolute;left:791.77px;top:248.94px;width:6.70px;height:12.86px;background:#4472c4"></div>
<div style="position:absolute;left:791.77px;top:244.74px;width:6.70px;height:4.20px;background:#a5a5a5"></div>
<div style="position:absolute;left:808.52px;top:261.80px;width:6.70px;height:6.65px;background:#ed7d31"></div>
<div style="position:absolute;left:808.52px;top:248.94px;width:6.70px;height:12.86px;background:#4472c4"></div>
<div style="position:absolute;left:808.52px;top:244.74px;width:6.70px;height:4.20px;background:#a5a5a5"></div>
<div style="position:absolute;left:825.27px;top:261.80px;width:6.70px;height:6.65px;background:#ed7d31"></div>
<div style="position:absolute;left:825.27px;top:248.94px;width:6.70px;height:12.86px;background:#4472c4"></div>
<div style="position:absolute;left:825.27px;top:244.74px;width:6.70px;height:4.20px;background:#a5a5a5"></div>
<div style="position:absolute;left:842.02px;top:261.80px;width:6.70px;height:6.65px;background:#ed7d31"></div>
<div style="position:absolute;left:842.02px;top:248.94px;width:6.70px;height:12.86px;background:#4472c4"></div>
<div style="position:absolute;left:842.02px;top:244.74px;width:6.70px;height:4.20px;background:#a5a5a5"></div>
<div style="position:absolute;left:858.77px;top:261.80px;width:6.70px;height:6.65px;background:#ed7d31"></div>
<div style="position:absolute;left:858.77px;top:248.94px;width:6.70px;height:12.86px;background:#4472c4"></div>
<div style="position:absolute;left:858.77px;top:244.74px;width:6.70px;height:4.20px;background:#a5a5a5"></div>
<div style="position:absolute;left:875.52px;top:261.80px;width:6.70px;height:6.65px;background:#ed7d31"></div>
<div style="position:absolute;left:875.52px;top:248.94px;width:6.70px;height:12.86px;background:#4472c4"></div>
<div style="position:absolute;left:875.52px;top:244.74px;width:6.70px;height:4.20px;background:#a5a5a5"></div>
<div style="position:absolute;left:892.27px;top:261.80px;width:6.70px;height:6.65px;background:#ed7d31"></div>
<div style="position:absolute;left:892.27px;top:248.94px;width:6.70px;height:12.86px;background:#4472c4"></div>
<div style="position:absolute;left:892.27px;top:244.74px;width:6.70px;height:4.20px;background:#a5a5a5"></div>
<div style="position:absolute;left:909.02px;top:261.80px;width:6.70px;height:6.65px;background:#ed7d31"></div>
<div style="position:absolute;left:909.02px;top:248.94px;width:6.70px;height:12.86px;background:#4472c4"></div>
<div style="position:absolute;left:909.02px;top:244.74px;width:6.70px;height:4.20px;background:#a5a5a5"></div>
<div style="position:absolute;left:925.77px;top:261.80px;width:6.70px;height:6.65px;background:#ed7d31"></div>
<div style="position:absolute;left:925.77px;top:248.94px;width:6.70px;height:12.86px;background:#4472c4"></div>
<div style="position:absolute;left:925.77px;top:244.74px;width:6.70px;height:4.20px;background:#a5a5a5"></div>
<div style="position:absolute;left:942.52px;top:261.80px;width:6.70px;height:6.65px;background:#ed7d31"></div>
<div style="position:absolute;left:942.52px;top:248.94px;width:6.70px;height:12.86px;background:#4472c4"></div>
<div style="position:absolute;left:942.52px;top:244.74px;width:6.70px;height:4.20px;background:#a5a5a5"></div>
<div style="position:absolute;left:959.27px;top:261.80px;width:6.70px;height:6.65px;background:#ed7d31"></div>
<div style="position:absolute;left:959.27px;top:248.94px;width:6.70px;height:12.86px;background:#4472c4"></div>
<div style="position:absolute;left:959.27px;top:244.74px;width:6.70px;height:4.20px;background:#a5a5a5"></div>
<div style="position:absolute;left:577.38px;top:304.00px;height:8.40px;line-height:8.40px;font-size:7.0px;color:#4a4a4a;white-space:nowrap;transform:translateX(-50%);-webkit-text-stroke:0.12px #4a4a4a">Jan</div>
<div style="position:absolute;left:594.12px;top:304.00px;height:8.40px;line-height:8.40px;font-size:7.0px;color:#4a4a4a;white-space:nowrap;transform:translateX(-50%);-webkit-text-stroke:0.12px #4a4a4a">Feb</div>
<div style="position:absolute;left:610.88px;top:304.00px;height:8.40px;line-height:8.40px;font-size:7.0px;color:#4a4a4a;white-space:nowrap;transform:translateX(-50%);-webkit-text-stroke:0.12px #4a4a4a">Mar</div>
<div style="position:absolute;left:627.62px;top:304.00px;height:8.40px;line-height:8.40px;font-size:7.0px;color:#4a4a4a;white-space:nowrap;transform:translateX(-50%);-webkit-text-stroke:0.12px #4a4a4a">Apr</div>
<div style="position:absolute;left:644.38px;top:304.00px;height:8.40px;line-height:8.40px;font-size:7.0px;color:#4a4a4a;white-space:nowrap;transform:translateX(-50%);-webkit-text-stroke:0.12px #4a4a4a">May</div>
<div style="position:absolute;left:661.12px;top:304.00px;height:8.40px;line-height:8.40px;font-size:7.0px;color:#4a4a4a;white-space:nowrap;transform:translateX(-50%);-webkit-text-stroke:0.12px #4a4a4a">Jun</div>
<div style="position:absolute;left:677.88px;top:304.00px;height:8.40px;line-height:8.40px;font-size:7.0px;color:#4a4a4a;white-space:nowrap;transform:translateX(-50%);-webkit-text-stroke:0.12px #4a4a4a">Jul</div>
<div style="position:absolute;left:694.62px;top:304.00px;height:8.40px;line-height:8.40px;font-size:7.0px;color:#4a4a4a;white-space:nowrap;transform:translateX(-50%);-webkit-text-stroke:0.12px #4a4a4a">Aug</div>
<div style="position:absolute;left:711.38px;top:304.00px;height:8.40px;line-height:8.40px;font-size:7.0px;color:#4a4a4a;white-space:nowrap;transform:translateX(-50%);-webkit-text-stroke:0.12px #4a4a4a">Sep</div>
<div style="position:absolute;left:728.12px;top:304.00px;height:8.40px;line-height:8.40px;font-size:7.0px;color:#4a4a4a;white-space:nowrap;transform:translateX(-50%);-webkit-text-stroke:0.12px #4a4a4a">Oct</div>
<div style="position:absolute;left:744.88px;top:304.00px;height:8.40px;line-height:8.40px;font-size:7.0px;color:#4a4a4a;white-space:nowrap;transform:translateX(-50%);-webkit-text-stroke:0.12px #4a4a4a">Nov</div>
<div style="position:absolute;left:761.62px;top:304.00px;height:8.40px;line-height:8.40px;font-size:7.0px;color:#4a4a4a;white-space:nowrap;transform:translateX(-50%);-webkit-text-stroke:0.12px #4a4a4a">Dec</div>
<div style="position:absolute;left:778.38px;top:304.00px;height:8.40px;line-height:8.40px;font-size:7.0px;color:#4a4a4a;white-space:nowrap;transform:translateX(-50%);-webkit-text-stroke:0.12px #4a4a4a">Jan</div>
<div style="position:absolute;left:795.12px;top:304.00px;height:8.40px;line-height:8.40px;font-size:7.0px;color:#4a4a4a;white-space:nowrap;transform:translateX(-50%);-webkit-text-stroke:0.12px #4a4a4a">Feb</div>
<div style="position:absolute;left:811.88px;top:304.00px;height:8.40px;line-height:8.40px;font-size:7.0px;color:#4a4a4a;white-space:nowrap;transform:translateX(-50%);-webkit-text-stroke:0.12px #4a4a4a">Mar</div>
<div style="position:absolute;left:828.62px;top:304.00px;height:8.40px;line-height:8.40px;font-size:7.0px;color:#4a4a4a;white-space:nowrap;transform:translateX(-50%);-webkit-text-stroke:0.12px #4a4a4a">Apr</div>
<div style="position:absolute;left:845.38px;top:304.00px;height:8.40px;line-height:8.40px;font-size:7.0px;color:#4a4a4a;white-space:nowrap;transform:translateX(-50%);-webkit-text-stroke:0.12px #4a4a4a">May</div>
<div style="position:absolute;left:862.12px;top:304.00px;height:8.40px;line-height:8.40px;font-size:7.0px;color:#4a4a4a;white-space:nowrap;transform:translateX(-50%);-webkit-text-stroke:0.12px #4a4a4a">Jun</div>
<div style="position:absolute;left:878.88px;top:304.00px;height:8.40px;line-height:8.40px;font-size:7.0px;color:#4a4a4a;white-space:nowrap;transform:translateX(-50%);-webkit-text-stroke:0.12px #4a4a4a">Jul</div>
<div style="position:absolute;left:895.62px;top:304.00px;height:8.40px;line-height:8.40px;font-size:7.0px;color:#4a4a4a;white-space:nowrap;transform:translateX(-50%);-webkit-text-stroke:0.12px #4a4a4a">Aug</div>
<div style="position:absolute;left:912.38px;top:304.00px;height:8.40px;line-height:8.40px;font-size:7.0px;color:#4a4a4a;white-space:nowrap;transform:translateX(-50%);-webkit-text-stroke:0.12px #4a4a4a">Sep</div>
<div style="position:absolute;left:929.12px;top:304.00px;height:8.40px;line-height:8.40px;font-size:7.0px;color:#4a4a4a;white-space:nowrap;transform:translateX(-50%);-webkit-text-stroke:0.12px #4a4a4a">Oct</div>
<div style="position:absolute;left:945.88px;top:304.00px;height:8.40px;line-height:8.40px;font-size:7.0px;color:#4a4a4a;white-space:nowrap;transform:translateX(-50%);-webkit-text-stroke:0.12px #4a4a4a">Nov</div>
<div style="position:absolute;left:962.62px;top:304.00px;height:8.40px;line-height:8.40px;font-size:7.0px;color:#4a4a4a;white-space:nowrap;transform:translateX(-50%);-webkit-text-stroke:0.12px #4a4a4a">Dec</div>
<div style="position:absolute;left:21.00px;top:320.00px;width:959.00px;height:260.00px;background:#fff;border:1px solid #e4e4e4"></div>
<div style="position:absolute;left:501.40px;top:327.88px;height:14.04px;line-height:14.04px;font-size:11.7px;color:#666666;white-space:nowrap;transform:translateX(-50%);">Key KPI's 5 Years 2025 - 2029</div>
<div style="position:absolute;left:333.20px;top:354.50px;width:4.00px;height:4.00px;background:#4472c4"></div>
<div style="position:absolute;left:338.40px;top:352.27px;height:8.46px;line-height:8.46px;font-size:7.05px;color:#4a4a4a;white-space:nowrap;">Revenue</div>
<div style="position:absolute;left:380.00px;top:354.50px;width:4.00px;height:4.00px;background:#ed7d31"></div>
<div style="position:absolute;left:385.00px;top:352.27px;height:8.46px;line-height:8.46px;font-size:7.05px;color:#4a4a4a;white-space:nowrap;">Total COGS</div>
<div style="position:absolute;left:434.00px;top:354.50px;width:4.00px;height:4.00px;background:#a5a5a5"></div>
<div style="position:absolute;left:439.50px;top:352.27px;height:8.46px;line-height:8.46px;font-size:7.05px;color:#4a4a4a;white-space:nowrap;">Total Variable Expenses</div>
<div style="position:absolute;left:527.20px;top:354.50px;width:4.00px;height:4.00px;background:#ffc000"></div>
<div style="position:absolute;left:532.80px;top:352.27px;height:8.46px;line-height:8.46px;font-size:7.05px;color:#4a4a4a;white-space:nowrap;">Total Admin Salary and Wages</div>
<div style="position:absolute;left:642.80px;top:354.50px;width:4.00px;height:4.00px;background:#5b9bd5"></div>
<div style="position:absolute;left:648.00px;top:352.27px;height:8.46px;line-height:8.46px;font-size:7.05px;color:#4a4a4a;white-space:nowrap;">EBITDA</div>
<div style="position:absolute;left:69.70px;top:372.60px;width:901.20px;height:187.80px;background:#f4f4f4"></div>
<div style="position:absolute;left:68.20px;top:372.60px;width:3.00px;height:187.80px;background:linear-gradient(90deg,#fafafa 0,#fafafa 33%,#eaeaea 33%,#eaeaea 67%,#fafafa 67%)"></div>
<div style="position:absolute;left:83.22px;top:372.60px;width:3.00px;height:187.80px;background:linear-gradient(90deg,#fafafa 0,#fafafa 33%,#eaeaea 33%,#eaeaea 67%,#fafafa 67%)"></div>
<div style="position:absolute;left:98.24px;top:372.60px;width:3.00px;height:187.80px;background:linear-gradient(90deg,#fafafa 0,#fafafa 33%,#eaeaea 33%,#eaeaea 67%,#fafafa 67%)"></div>
<div style="position:absolute;left:113.26px;top:372.60px;width:3.00px;height:187.80px;background:linear-gradient(90deg,#fafafa 0,#fafafa 33%,#eaeaea 33%,#eaeaea 67%,#fafafa 67%)"></div>
<div style="position:absolute;left:128.28px;top:372.60px;width:3.00px;height:187.80px;background:linear-gradient(90deg,#fafafa 0,#fafafa 33%,#eaeaea 33%,#eaeaea 67%,#fafafa 67%)"></div>
<div style="position:absolute;left:143.30px;top:372.60px;width:3.00px;height:187.80px;background:linear-gradient(90deg,#fafafa 0,#fafafa 33%,#eaeaea 33%,#eaeaea 67%,#fafafa 67%)"></div>
<div style="position:absolute;left:158.32px;top:372.60px;width:3.00px;height:187.80px;background:linear-gradient(90deg,#fafafa 0,#fafafa 33%,#eaeaea 33%,#eaeaea 67%,#fafafa 67%)"></div>
<div style="position:absolute;left:173.34px;top:372.60px;width:3.00px;height:187.80px;background:linear-gradient(90deg,#fafafa 0,#fafafa 33%,#eaeaea 33%,#eaeaea 67%,#fafafa 67%)"></div>
<div style="position:absolute;left:188.36px;top:372.60px;width:3.00px;height:187.80px;background:linear-gradient(90deg,#fafafa 0,#fafafa 33%,#eaeaea 33%,#eaeaea 67%,#fafafa 67%)"></div>
<div style="position:absolute;left:203.38px;top:372.60px;width:3.00px;height:187.80px;background:linear-gradient(90deg,#fafafa 0,#fafafa 33%,#eaeaea 33%,#eaeaea 67%,#fafafa 67%)"></div>
<div style="position:absolute;left:218.40px;top:372.60px;width:3.00px;height:187.80px;background:linear-gradient(90deg,#fafafa 0,#fafafa 33%,#eaeaea 33%,#eaeaea 67%,#fafafa 67%)"></div>
<div style="position:absolute;left:233.42px;top:372.60px;width:3.00px;height:187.80px;background:linear-gradient(90deg,#fafafa 0,#fafafa 33%,#eaeaea 33%,#eaeaea 67%,#fafafa 67%)"></div>
<div style="position:absolute;left:248.44px;top:372.60px;width:3.00px;height:187.80px;background:linear-gradient(90deg,#fafafa 0,#fafafa 33%,#eaeaea 33%,#eaeaea 67%,#fafafa 67%)"></div>
<div style="position:absolute;left:263.46px;top:372.60px;width:3.00px;height:187.80px;background:linear-gradient(90deg,#fafafa 0,#fafafa 33%,#eaeaea 33%,#eaeaea 67%,#fafafa 67%)"></div>
<div style="position:absolute;left:278.48px;top:372.60px;width:3.00px;height:187.80px;background:linear-gradient(90deg,#fafafa 0,#fafafa 33%,#eaeaea 33%,#eaeaea 67%,#fafafa 67%)"></div>
<div style="position:absolute;left:293.50px;top:372.60px;width:3.00px;height:187.80px;background:linear-gradient(90deg,#fafafa 0,#fafafa 33%,#eaeaea 33%,#eaeaea 67%,#fafafa 67%)"></div>
<div style="position:absolute;left:308.52px;top:372.60px;width:3.00px;height:187.80px;background:linear-gradient(90deg,#fafafa 0,#fafafa 33%,#eaeaea 33%,#eaeaea 67%,#fafafa 67%)"></div>
<div style="position:absolute;left:323.54px;top:372.60px;width:3.00px;height:187.80px;background:linear-gradient(90deg,#fafafa 0,#fafafa 33%,#eaeaea 33%,#eaeaea 67%,#fafafa 67%)"></div>
<div style="position:absolute;left:338.56px;top:372.60px;width:3.00px;height:187.80px;background:linear-gradient(90deg,#fafafa 0,#fafafa 33%,#eaeaea 33%,#eaeaea 67%,#fafafa 67%)"></div>
<div style="position:absolute;left:353.58px;top:372.60px;width:3.00px;height:187.80px;background:linear-gradient(90deg,#fafafa 0,#fafafa 33%,#eaeaea 33%,#eaeaea 67%,#fafafa 67%)"></div>
<div style="position:absolute;left:368.60px;top:372.60px;width:3.00px;height:187.80px;background:linear-gradient(90deg,#fafafa 0,#fafafa 33%,#eaeaea 33%,#eaeaea 67%,#fafafa 67%)"></div>
<div style="position:absolute;left:383.62px;top:372.60px;width:3.00px;height:187.80px;background:linear-gradient(90deg,#fafafa 0,#fafafa 33%,#eaeaea 33%,#eaeaea 67%,#fafafa 67%)"></div>
<div style="position:absolute;left:398.64px;top:372.60px;width:3.00px;height:187.80px;background:linear-gradient(90deg,#fafafa 0,#fafafa 33%,#eaeaea 33%,#eaeaea 67%,#fafafa 67%)"></div>
<div style="position:absolute;left:413.66px;top:372.60px;width:3.00px;height:187.80px;background:linear-gradient(90deg,#fafafa 0,#fafafa 33%,#eaeaea 33%,#eaeaea 67%,#fafafa 67%)"></div>
<div style="position:absolute;left:428.68px;top:372.60px;width:3.00px;height:187.80px;background:linear-gradient(90deg,#fafafa 0,#fafafa 33%,#eaeaea 33%,#eaeaea 67%,#fafafa 67%)"></div>
<div style="position:absolute;left:443.70px;top:372.60px;width:3.00px;height:187.80px;background:linear-gradient(90deg,#fafafa 0,#fafafa 33%,#eaeaea 33%,#eaeaea 67%,#fafafa 67%)"></div>
<div style="position:absolute;left:458.72px;top:372.60px;width:3.00px;height:187.80px;background:linear-gradient(90deg,#fafafa 0,#fafafa 33%,#eaeaea 33%,#eaeaea 67%,#fafafa 67%)"></div>
<div style="position:absolute;left:473.74px;top:372.60px;width:3.00px;height:187.80px;background:linear-gradient(90deg,#fafafa 0,#fafafa 33%,#eaeaea 33%,#eaeaea 67%,#fafafa 67%)"></div>
<div style="position:absolute;left:488.76px;top:372.60px;width:3.00px;height:187.80px;background:linear-gradient(90deg,#fafafa 0,#fafafa 33%,#eaeaea 33%,#eaeaea 67%,#fafafa 67%)"></div>
<div style="position:absolute;left:503.78px;top:372.60px;width:3.00px;height:187.80px;background:linear-gradient(90deg,#fafafa 0,#fafafa 33%,#eaeaea 33%,#eaeaea 67%,#fafafa 67%)"></div>
<div style="position:absolute;left:518.80px;top:372.60px;width:3.00px;height:187.80px;background:linear-gradient(90deg,#fafafa 0,#fafafa 33%,#eaeaea 33%,#eaeaea 67%,#fafafa 67%)"></div>
<div style="position:absolute;left:533.82px;top:372.60px;width:3.00px;height:187.80px;background:linear-gradient(90deg,#fafafa 0,#fafafa 33%,#eaeaea 33%,#eaeaea 67%,#fafafa 67%)"></div>
<div style="position:absolute;left:548.84px;top:372.60px;width:3.00px;height:187.80px;background:linear-gradient(90deg,#fafafa 0,#fafafa 33%,#eaeaea 33%,#eaeaea 67%,#fafafa 67%)"></div>
<div style="position:absolute;left:563.86px;top:372.60px;width:3.00px;height:187.80px;background:linear-gradient(90deg,#fafafa 0,#fafafa 33%,#eaeaea 33%,#eaeaea 67%,#fafafa 67%)"></div>
<div style="position:absolute;left:578.88px;top:372.60px;width:3.00px;height:187.80px;background:linear-gradient(90deg,#fafafa 0,#fafafa 33%,#eaeaea 33%,#eaeaea 67%,#fafafa 67%)"></div>
<div style="position:absolute;left:593.90px;top:372.60px;width:3.00px;height:187.80px;background:linear-gradient(90deg,#fafafa 0,#fafafa 33%,#eaeaea 33%,#eaeaea 67%,#fafafa 67%)"></div>
<div style="position:absolute;left:608.92px;top:372.60px;width:3.00px;height:187.80px;background:linear-gradient(90deg,#fafafa 0,#fafafa 33%,#eaeaea 33%,#eaeaea 67%,#fafafa 67%)"></div>
<div style="position:absolute;left:623.94px;top:372.60px;width:3.00px;height:187.80px;background:linear-gradient(90deg,#fafafa 0,#fafafa 33%,#eaeaea 33%,#eaeaea 67%,#fafafa 67%)"></div>
<div style="position:absolute;left:638.96px;top:372.60px;width:3.00px;height:187.80px;background:linear-gradient(90deg,#fafafa 0,#fafafa 33%,#eaeaea 33%,#eaeaea 67%,#fafafa 67%)"></div>
<div style="position:absolute;left:653.98px;top:372.60px;width:3.00px;height:187.80px;background:linear-gradient(90deg,#fafafa 0,#fafafa 33%,#eaeaea 33%,#eaeaea 67%,#fafafa 67%)"></div>
<div style="position:absolute;left:669.00px;top:372.60px;width:3.00px;height:187.80px;background:linear-gradient(90deg,#fafafa 0,#fafafa 33%,#eaeaea 33%,#eaeaea 67%,#fafafa 67%)"></div>
<div style="position:absolute;left:684.02px;top:372.60px;width:3.00px;height:187.80px;background:linear-gradient(90deg,#fafafa 0,#fafafa 33%,#eaeaea 33%,#eaeaea 67%,#fafafa 67%)"></div>
<div style="position:absolute;left:699.04px;top:372.60px;width:3.00px;height:187.80px;background:linear-gradient(90deg,#fafafa 0,#fafafa 33%,#eaeaea 33%,#eaeaea 67%,#fafafa 67%)"></div>
<div style="position:absolute;left:714.06px;top:372.60px;width:3.00px;height:187.80px;background:linear-gradient(90deg,#fafafa 0,#fafafa 33%,#eaeaea 33%,#eaeaea 67%,#fafafa 67%)"></div>
<div style="position:absolute;left:729.08px;top:372.60px;width:3.00px;height:187.80px;background:linear-gradient(90deg,#fafafa 0,#fafafa 33%,#eaeaea 33%,#eaeaea 67%,#fafafa 67%)"></div>
<div style="position:absolute;left:744.10px;top:372.60px;width:3.00px;height:187.80px;background:linear-gradient(90deg,#fafafa 0,#fafafa 33%,#eaeaea 33%,#eaeaea 67%,#fafafa 67%)"></div>
<div style="position:absolute;left:759.12px;top:372.60px;width:3.00px;height:187.80px;background:linear-gradient(90deg,#fafafa 0,#fafafa 33%,#eaeaea 33%,#eaeaea 67%,#fafafa 67%)"></div>
<div style="position:absolute;left:774.14px;top:372.60px;width:3.00px;height:187.80px;background:linear-gradient(90deg,#fafafa 0,#fafafa 33%,#eaeaea 33%,#eaeaea 67%,#fafafa 67%)"></div>
<div style="position:absolute;left:789.16px;top:372.60px;width:3.00px;height:187.80px;background:linear-gradient(90deg,#fafafa 0,#fafafa 33%,#eaeaea 33%,#eaeaea 67%,#fafafa 67%)"></div>
<div style="position:absolute;left:804.18px;top:372.60px;width:3.00px;height:187.80px;background:linear-gradient(90deg,#fafafa 0,#fafafa 33%,#eaeaea 33%,#eaeaea 67%,#fafafa 67%)"></div>
<div style="position:absolute;left:819.20px;top:372.60px;width:3.00px;height:187.80px;background:linear-gradient(90deg,#fafafa 0,#fafafa 33%,#eaeaea 33%,#eaeaea 67%,#fafafa 67%)"></div>
<div style="position:absolute;left:834.22px;top:372.60px;width:3.00px;height:187.80px;background:linear-gradient(90deg,#fafafa 0,#fafafa 33%,#eaeaea 33%,#eaeaea 67%,#fafafa 67%)"></div>
<div style="position:absolute;left:849.24px;top:372.60px;width:3.00px;height:187.80px;background:linear-gradient(90deg,#fafafa 0,#fafafa 33%,#eaeaea 33%,#eaeaea 67%,#fafafa 67%)"></div>
<div style="position:absolute;left:864.26px;top:372.60px;width:3.00px;height:187.80px;background:linear-gradient(90deg,#fafafa 0,#fafafa 33%,#eaeaea 33%,#eaeaea 67%,#fafafa 67%)"></div>
<div style="position:absolute;left:879.28px;top:372.60px;width:3.00px;height:187.80px;background:linear-gradient(90deg,#fafafa 0,#fafafa 33%,#eaeaea 33%,#eaeaea 67%,#fafafa 67%)"></div>
<div style="position:absolute;left:894.30px;top:372.60px;width:3.00px;height:187.80px;background:linear-gradient(90deg,#fafafa 0,#fafafa 33%,#eaeaea 33%,#eaeaea 67%,#fafafa 67%)"></div>
<div style="position:absolute;left:909.32px;top:372.60px;width:3.00px;height:187.80px;background:linear-gradient(90deg,#fafafa 0,#fafafa 33%,#eaeaea 33%,#eaeaea 67%,#fafafa 67%)"></div>
<div style="position:absolute;left:924.34px;top:372.60px;width:3.00px;height:187.80px;background:linear-gradient(90deg,#fafafa 0,#fafafa 33%,#eaeaea 33%,#eaeaea 67%,#fafafa 67%)"></div>
<div style="position:absolute;left:939.36px;top:372.60px;width:3.00px;height:187.80px;background:linear-gradient(90deg,#fafafa 0,#fafafa 33%,#eaeaea 33%,#eaeaea 67%,#fafafa 67%)"></div>
<div style="position:absolute;left:954.38px;top:372.60px;width:3.00px;height:187.80px;background:linear-gradient(90deg,#fafafa 0,#fafafa 33%,#eaeaea 33%,#eaeaea 67%,#fafafa 67%)"></div>
<div style="position:absolute;left:969.40px;top:372.60px;width:3.00px;height:187.80px;background:linear-gradient(90deg,#fafafa 0,#fafafa 33%,#eaeaea 33%,#eaeaea 67%,#fafafa 67%)"></div>
<div style="position:absolute;left:69.70px;top:371.10px;width:901.20px;height:3.00px;background:linear-gradient(#fafafa 0,#fafafa 25%,#e6e6e6 25%,#e6e6e6 75%,#fafafa 75%)"></div>
<div style="position:absolute;left:62.40px;top:368.64px;height:7.92px;line-height:7.92px;font-size:6.6px;color:#4a4a4a;white-space:nowrap;transform:translateX(-100%);-webkit-text-stroke:0.1px #4a4a4a">20,000,000</div>
<div style="position:absolute;left:69.70px;top:402.40px;width:901.20px;height:3.00px;background:linear-gradient(#fafafa 0,#fafafa 25%,#e6e6e6 25%,#e6e6e6 75%,#fafafa 75%)"></div>
<div style="position:absolute;left:62.40px;top:399.94px;height:7.92px;line-height:7.92px;font-size:6.6px;color:#4a4a4a;white-space:nowrap;transform:translateX(-100%);-webkit-text-stroke:0.1px #4a4a4a">16,000,000</div>
<div style="position:absolute;left:69.70px;top:433.70px;width:901.20px;height:3.00px;background:linear-gradient(#fafafa 0,#fafafa 25%,#e6e6e6 25%,#e6e6e6 75%,#fafafa 75%)"></div>
<div style="position:absolute;left:62.40px;top:431.24px;height:7.92px;line-height:7.92px;font-size:6.6px;color:#4a4a4a;white-space:nowrap;transform:translateX(-100%);-webkit-text-stroke:0.1px #4a4a4a">12,000,000</div>
<div style="position:absolute;left:69.70px;top:465.00px;width:901.20px;height:3.00px;background:linear-gradient(#fafafa 0,#fafafa 25%,#e6e6e6 25%,#e6e6e6 75%,#fafafa 75%)"></div>
<div style="position:absolute;left:62.40px;top:462.54px;height:7.92px;line-height:7.92px;font-size:6.6px;color:#4a4a4a;white-space:nowrap;transform:translateX(-100%);-webkit-text-stroke:0.1px #4a4a4a">8,000,000</div>
<div style="position:absolute;left:69.70px;top:496.30px;width:901.20px;height:3.00px;background:linear-gradient(#fafafa 0,#fafafa 25%,#e6e6e6 25%,#e6e6e6 75%,#fafafa 75%)"></div>
<div style="position:absolute;left:62.40px;top:493.84px;height:7.92px;line-height:7.92px;font-size:6.6px;color:#4a4a4a;white-space:nowrap;transform:translateX(-100%);-webkit-text-stroke:0.1px #4a4a4a">4,000,000</div>
<div style="position:absolute;left:69.70px;top:527.60px;width:901.20px;height:3.00px;background:linear-gradient(#fafafa 0,#fafafa 25%,#e6e6e6 25%,#e6e6e6 75%,#fafafa 75%)"></div>
<div style="position:absolute;left:62.40px;top:525.14px;height:7.92px;line-height:7.92px;font-size:6.6px;color:#4a4a4a;white-space:nowrap;transform:translateX(-100%);-webkit-text-stroke:0.1px #4a4a4a">0</div>
<div style="position:absolute;left:69.70px;top:558.90px;width:901.20px;height:3.00px;background:linear-gradient(#fafafa 0,#fafafa 25%,#e6e6e6 25%,#e6e6e6 75%,#fafafa 75%)"></div>
<div style="position:absolute;left:62.40px;top:556.44px;height:7.92px;line-height:7.92px;font-size:6.6px;color:#4a4a4a;white-space:nowrap;transform:translateX(-100%);-webkit-text-stroke:0.1px #4a4a4a">-4,000,000</div>
<div style="position:absolute;left:74.21px;top:462.59px;width:6.00px;height:66.67px;background:#4472c4"></div>
<div style="position:absolute;left:74.21px;top:397.87px;width:6.00px;height:64.71px;background:#5b9bd5"></div>
<div style="position:absolute;left:89.23px;top:462.59px;width:6.00px;height:66.67px;background:#4472c4"></div>
<div style="position:absolute;left:89.23px;top:397.87px;width:6.00px;height:64.71px;background:#5b9bd5"></div>
<div style="position:absolute;left:104.25px;top:462.59px;width:6.00px;height:66.67px;background:#4472c4"></div>
<div style="position:absolute;left:104.25px;top:397.87px;width:6.00px;height:64.71px;background:#5b9bd5"></div>
<div style="position:absolute;left:119.27px;top:462.59px;width:6.00px;height:66.67px;background:#4472c4"></div>
<div style="position:absolute;left:119.27px;top:397.87px;width:6.00px;height:64.71px;background:#5b9bd5"></div>
<div style="position:absolute;left:134.29px;top:462.59px;width:6.00px;height:66.67px;background:#4472c4"></div>
<div style="position:absolute;left:134.29px;top:397.87px;width:6.00px;height:64.71px;background:#5b9bd5"></div>
<div style="position:absolute;left:149.31px;top:462.59px;width:6.00px;height:66.67px;background:#4472c4"></div>
<div style="position:absolute;left:149.31px;top:397.87px;width:6.00px;height:64.71px;background:#5b9bd5"></div>
<div style="position:absolute;left:164.33px;top:462.59px;width:6.00px;height:66.67px;background:#4472c4"></div>
<div style="position:absolute;left:164.33px;top:397.87px;width:6.00px;height:64.71px;background:#5b9bd5"></div>
<div style="position:absolute;left:179.35px;top:462.59px;width:6.00px;height:66.67px;background:#4472c4"></div>
<div style="position:absolute;left:179.35px;top:397.87px;width:6.00px;height:64.71px;background:#5b9bd5"></div>
<div style="position:absolute;left:194.37px;top:462.59px;width:6.00px;height:66.67px;background:#4472c4"></div>
<div style="position:absolute;left:194.37px;top:397.87px;width:6.00px;height:64.71px;background:#5b9bd5"></div>
<div style="position:absolute;left:209.39px;top:462.59px;width:6.00px;height:66.67px;background:#4472c4"></div>
<div style="position:absolute;left:209.39px;top:397.87px;width:6.00px;height:64.71px;background:#5b9bd5"></div>
<div style="position:absolute;left:224.41px;top:462.59px;width:6.00px;height:66.67px;background:#4472c4"></div>
<div style="position:absolute;left:224.41px;top:397.87px;width:6.00px;height:64.71px;background:#5b9bd5"></div>
<div style="position:absolute;left:239.43px;top:462.59px;width:6.00px;height:66.67px;background:#4472c4"></div>
<div style="position:absolute;left:239.43px;top:397.87px;width:6.00px;height:64.71px;background:#5b9bd5"></div>
<div style="position:absolute;left:254.45px;top:518.14px;width:6.00px;height:11.11px;background:#4472c4"></div>
<div style="position:absolute;left:254.45px;top:509.30px;width:6.00px;height:8.84px;background:#5b9bd5"></div>
<div style="position:absolute;left:269.47px;top:518.14px;width:6.00px;height:11.11px;background:#4472c4"></div>
<div style="position:absolute;left:269.47px;top:509.30px;width:6.00px;height:8.84px;background:#5b9bd5"></div>
<div style="position:absolute;left:284.49px;top:518.14px;width:6.00px;height:11.11px;background:#4472c4"></div>
<div style="position:absolute;left:284.49px;top:509.30px;width:6.00px;height:8.84px;background:#5b9bd5"></div>
<div style="position:absolute;left:299.51px;top:518.14px;width:6.00px;height:11.11px;background:#4472c4"></div>
<div style="position:absolute;left:299.51px;top:509.30px;width:6.00px;height:8.84px;background:#5b9bd5"></div>
<div style="position:absolute;left:314.53px;top:518.14px;width:6.00px;height:11.11px;background:#4472c4"></div>
<div style="position:absolute;left:314.53px;top:509.30px;width:6.00px;height:8.84px;background:#5b9bd5"></div>
<div style="position:absolute;left:329.55px;top:518.14px;width:6.00px;height:11.11px;background:#4472c4"></div>
<div style="position:absolute;left:329.55px;top:509.30px;width:6.00px;height:8.84px;background:#5b9bd5"></div>
<div style="position:absolute;left:344.57px;top:518.14px;width:6.00px;height:11.11px;background:#4472c4"></div>
<div style="position:absolute;left:344.57px;top:509.30px;width:6.00px;height:8.84px;background:#5b9bd5"></div>
<div style="position:absolute;left:359.59px;top:518.14px;width:6.00px;height:11.11px;background:#4472c4"></div>
<div style="position:absolute;left:359.59px;top:509.30px;width:6.00px;height:8.84px;background:#5b9bd5"></div>
<div style="position:absolute;left:374.61px;top:518.14px;width:6.00px;height:11.11px;background:#4472c4"></div>
<div style="position:absolute;left:374.61px;top:509.30px;width:6.00px;height:8.84px;background:#5b9bd5"></div>
<div style="position:absolute;left:389.63px;top:518.14px;width:6.00px;height:11.11px;background:#4472c4"></div>
<div style="position:absolute;left:389.63px;top:509.30px;width:6.00px;height:8.84px;background:#5b9bd5"></div>
<div style="position:absolute;left:404.65px;top:518.14px;width:6.00px;height:11.11px;background:#4472c4"></div>
<div style="position:absolute;left:404.65px;top:509.30px;width:6.00px;height:8.84px;background:#5b9bd5"></div>
<div style="position:absolute;left:419.67px;top:518.14px;width:6.00px;height:11.11px;background:#4472c4"></div>
<div style="position:absolute;left:419.67px;top:509.30px;width:6.00px;height:8.84px;background:#5b9bd5"></div>
<div style="position:absolute;left:434.69px;top:518.14px;width:6.00px;height:11.11px;background:#4472c4"></div>
<div style="position:absolute;left:434.69px;top:509.30px;width:6.00px;height:8.84px;background:#5b9bd5"></div>
<div style="position:absolute;left:449.71px;top:518.14px;width:6.00px;height:11.11px;background:#4472c4"></div>
<div style="position:absolute;left:449.71px;top:509.30px;width:6.00px;height:8.84px;background:#5b9bd5"></div>
<div style="position:absolute;left:464.73px;top:518.14px;width:6.00px;height:11.11px;background:#4472c4"></div>
<div style="position:absolute;left:464.73px;top:509.30px;width:6.00px;height:8.84px;background:#5b9bd5"></div>
<div style="position:absolute;left:479.75px;top:518.14px;width:6.00px;height:11.11px;background:#4472c4"></div>
<div style="position:absolute;left:479.75px;top:509.30px;width:6.00px;height:8.84px;background:#5b9bd5"></div>
<div style="position:absolute;left:494.77px;top:518.14px;width:6.00px;height:11.11px;background:#4472c4"></div>
<div style="position:absolute;left:494.77px;top:509.30px;width:6.00px;height:8.84px;background:#5b9bd5"></div>
<div style="position:absolute;left:509.79px;top:518.14px;width:6.00px;height:11.11px;background:#4472c4"></div>
<div style="position:absolute;left:509.79px;top:509.30px;width:6.00px;height:8.84px;background:#5b9bd5"></div>
<div style="position:absolute;left:524.81px;top:518.14px;width:6.00px;height:11.11px;background:#4472c4"></div>
<div style="position:absolute;left:524.81px;top:509.30px;width:6.00px;height:8.84px;background:#5b9bd5"></div>
<div style="position:absolute;left:539.83px;top:518.14px;width:6.00px;height:11.11px;background:#4472c4"></div>
<div style="position:absolute;left:539.83px;top:509.30px;width:6.00px;height:8.84px;background:#5b9bd5"></div>
<div style="position:absolute;left:554.85px;top:518.14px;width:6.00px;height:11.11px;background:#4472c4"></div>
<div style="position:absolute;left:554.85px;top:509.30px;width:6.00px;height:8.84px;background:#5b9bd5"></div>
<div style="position:absolute;left:569.87px;top:518.14px;width:6.00px;height:11.11px;background:#4472c4"></div>
<div style="position:absolute;left:569.87px;top:509.30px;width:6.00px;height:8.84px;background:#5b9bd5"></div>
<div style="position:absolute;left:584.89px;top:518.14px;width:6.00px;height:11.11px;background:#4472c4"></div>
<div style="position:absolute;left:584.89px;top:509.30px;width:6.00px;height:8.84px;background:#5b9bd5"></div>
<div style="position:absolute;left:599.91px;top:518.14px;width:6.00px;height:11.11px;background:#4472c4"></div>
<div style="position:absolute;left:599.91px;top:509.30px;width:6.00px;height:8.84px;background:#5b9bd5"></div>
<div style="position:absolute;left:614.93px;top:518.14px;width:6.00px;height:11.11px;background:#4472c4"></div>
<div style="position:absolute;left:614.93px;top:509.30px;width:6.00px;height:8.84px;background:#5b9bd5"></div>
<div style="position:absolute;left:629.95px;top:518.14px;width:6.00px;height:11.11px;background:#4472c4"></div>
<div style="position:absolute;left:629.95px;top:509.30px;width:6.00px;height:8.84px;background:#5b9bd5"></div>
<div style="position:absolute;left:644.97px;top:518.14px;width:6.00px;height:11.11px;background:#4472c4"></div>
<div style="position:absolute;left:644.97px;top:509.30px;width:6.00px;height:8.84px;background:#5b9bd5"></div>
<div style="position:absolute;left:659.99px;top:518.14px;width:6.00px;height:11.11px;background:#4472c4"></div>
<div style="position:absolute;left:659.99px;top:509.30px;width:6.00px;height:8.84px;background:#5b9bd5"></div>
<div style="position:absolute;left:675.01px;top:518.14px;width:6.00px;height:11.11px;background:#4472c4"></div>
<div style="position:absolute;left:675.01px;top:509.30px;width:6.00px;height:8.84px;background:#5b9bd5"></div>
<div style="position:absolute;left:690.03px;top:518.14px;width:6.00px;height:11.11px;background:#4472c4"></div>
<div style="position:absolute;left:690.03px;top:509.30px;width:6.00px;height:8.84px;background:#5b9bd5"></div>
<div style="position:absolute;left:705.05px;top:518.14px;width:6.00px;height:11.11px;background:#4472c4"></div>
<div style="position:absolute;left:705.05px;top:509.30px;width:6.00px;height:8.84px;background:#5b9bd5"></div>
<div style="position:absolute;left:720.07px;top:518.14px;width:6.00px;height:11.11px;background:#4472c4"></div>
<div style="position:absolute;left:720.07px;top:509.30px;width:6.00px;height:8.84px;background:#5b9bd5"></div>
<div style="position:absolute;left:735.09px;top:518.14px;width:6.00px;height:11.11px;background:#4472c4"></div>
<div style="position:absolute;left:735.09px;top:509.30px;width:6.00px;height:8.84px;background:#5b9bd5"></div>
<div style="position:absolute;left:750.11px;top:518.14px;width:6.00px;height:11.11px;background:#4472c4"></div>
<div style="position:absolute;left:750.11px;top:509.30px;width:6.00px;height:8.84px;background:#5b9bd5"></div>
<div style="position:absolute;left:765.13px;top:518.14px;width:6.00px;height:11.11px;background:#4472c4"></div>
<div style="position:absolute;left:765.13px;top:509.30px;width:6.00px;height:8.84px;background:#5b9bd5"></div>
<div style="position:absolute;left:780.15px;top:518.14px;width:6.00px;height:11.11px;background:#4472c4"></div>
<div style="position:absolute;left:780.15px;top:509.30px;width:6.00px;height:8.84px;background:#5b9bd5"></div>
<div style="position:absolute;left:795.17px;top:464.94px;width:6.00px;height:64.32px;background:#4472c4"></div>
<div style="position:absolute;left:795.17px;top:403.59px;width:6.00px;height:61.35px;background:#5b9bd5"></div>
<div style="position:absolute;left:810.19px;top:464.94px;width:6.00px;height:64.32px;background:#4472c4"></div>
<div style="position:absolute;left:810.19px;top:403.59px;width:6.00px;height:61.35px;background:#5b9bd5"></div>
<div style="position:absolute;left:825.21px;top:464.94px;width:6.00px;height:64.32px;background:#4472c4"></div>
<div style="position:absolute;left:825.21px;top:403.59px;width:6.00px;height:61.35px;background:#5b9bd5"></div>
<div style="position:absolute;left:840.23px;top:464.94px;width:6.00px;height:64.32px;background:#4472c4"></div>
<div style="position:absolute;left:840.23px;top:403.59px;width:6.00px;height:61.35px;background:#5b9bd5"></div>
<div style="position:absolute;left:855.25px;top:464.94px;width:6.00px;height:64.32px;background:#4472c4"></div>
<div style="position:absolute;left:855.25px;top:403.59px;width:6.00px;height:61.35px;background:#5b9bd5"></div>
<div style="position:absolute;left:870.27px;top:464.94px;width:6.00px;height:64.32px;background:#4472c4"></div>
<div style="position:absolute;left:870.27px;top:403.59px;width:6.00px;height:61.35px;background:#5b9bd5"></div>
<div style="position:absolute;left:885.29px;top:464.94px;width:6.00px;height:64.32px;background:#4472c4"></div>
<div style="position:absolute;left:885.29px;top:403.59px;width:6.00px;height:61.35px;background:#5b9bd5"></div>
<div style="position:absolute;left:900.31px;top:464.94px;width:6.00px;height:64.32px;background:#4472c4"></div>
<div style="position:absolute;left:900.31px;top:403.59px;width:6.00px;height:61.35px;background:#5b9bd5"></div>
<div style="position:absolute;left:915.33px;top:464.94px;width:6.00px;height:64.32px;background:#4472c4"></div>
<div style="position:absolute;left:915.33px;top:403.59px;width:6.00px;height:61.35px;background:#5b9bd5"></div>
<div style="position:absolute;left:930.35px;top:464.94px;width:6.00px;height:64.32px;background:#4472c4"></div>
<div style="position:absolute;left:930.35px;top:403.59px;width:6.00px;height:61.35px;background:#5b9bd5"></div>
<div style="position:absolute;left:945.37px;top:464.94px;width:6.00px;height:64.32px;background:#4472c4"></div>
<div style="position:absolute;left:945.37px;top:403.59px;width:6.00px;height:61.35px;background:#5b9bd5"></div>
<div style="position:absolute;left:960.39px;top:464.94px;width:6.00px;height:64.32px;background:#4472c4"></div>
<div style="position:absolute;left:960.39px;top:403.59px;width:6.00px;height:61.35px;background:#5b9bd5"></div>
<div style="position:absolute;left:77.21px;top:534.76px;height:7.68px;line-height:7.68px;font-size:6.4px;color:#4a4a4a;white-space:nowrap;transform:translateX(-50%);-webkit-text-stroke:0.12px #4a4a4a">Jan</div>
<div style="position:absolute;left:92.23px;top:534.76px;height:7.68px;line-height:7.68px;font-size:6.4px;color:#4a4a4a;white-space:nowrap;transform:translateX(-50%);-webkit-text-stroke:0.12px #4a4a4a">Feb</div>
<div style="position:absolute;left:107.25px;top:534.76px;height:7.68px;line-height:7.68px;font-size:6.4px;color:#4a4a4a;white-space:nowrap;transform:translateX(-50%);-webkit-text-stroke:0.12px #4a4a4a">Mar</div>
<div style="position:absolute;left:122.27px;top:534.76px;height:7.68px;line-height:7.68px;font-size:6.4px;color:#4a4a4a;white-space:nowrap;transform:translateX(-50%);-webkit-text-stroke:0.12px #4a4a4a">Apr</div>
<div style="position:absolute;left:137.29px;top:534.76px;height:7.68px;line-height:7.68px;font-size:6.4px;color:#4a4a4a;white-space:nowrap;transform:translateX(-50%);-webkit-text-stroke:0.12px #4a4a4a">May</div>
<div style="position:absolute;left:152.31px;top:534.76px;height:7.68px;line-height:7.68px;font-size:6.4px;color:#4a4a4a;white-space:nowrap;transform:translateX(-50%);-webkit-text-stroke:0.12px #4a4a4a">Jun</div>
<div style="position:absolute;left:167.33px;top:534.76px;height:7.68px;line-height:7.68px;font-size:6.4px;color:#4a4a4a;white-space:nowrap;transform:translateX(-50%);-webkit-text-stroke:0.12px #4a4a4a">Jul</div>
<div style="position:absolute;left:182.35px;top:534.76px;height:7.68px;line-height:7.68px;font-size:6.4px;color:#4a4a4a;white-space:nowrap;transform:translateX(-50%);-webkit-text-stroke:0.12px #4a4a4a">Aug</div>
<div style="position:absolute;left:197.37px;top:534.76px;height:7.68px;line-height:7.68px;font-size:6.4px;color:#4a4a4a;white-space:nowrap;transform:translateX(-50%);-webkit-text-stroke:0.12px #4a4a4a">Sep</div>
<div style="position:absolute;left:212.39px;top:534.76px;height:7.68px;line-height:7.68px;font-size:6.4px;color:#4a4a4a;white-space:nowrap;transform:translateX(-50%);-webkit-text-stroke:0.12px #4a4a4a">Oct</div>
<div style="position:absolute;left:227.41px;top:534.76px;height:7.68px;line-height:7.68px;font-size:6.4px;color:#4a4a4a;white-space:nowrap;transform:translateX(-50%);-webkit-text-stroke:0.12px #4a4a4a">Nov</div>
<div style="position:absolute;left:242.43px;top:534.76px;height:7.68px;line-height:7.68px;font-size:6.4px;color:#4a4a4a;white-space:nowrap;transform:translateX(-50%);-webkit-text-stroke:0.12px #4a4a4a">Dec</div>
<div style="position:absolute;left:257.45px;top:534.76px;height:7.68px;line-height:7.68px;font-size:6.4px;color:#4a4a4a;white-space:nowrap;transform:translateX(-50%);-webkit-text-stroke:0.12px #4a4a4a">Jan</div>
<div style="position:absolute;left:272.47px;top:534.76px;height:7.68px;line-height:7.68px;font-size:6.4px;color:#4a4a4a;white-space:nowrap;transform:translateX(-50%);-webkit-text-stroke:0.12px #4a4a4a">Feb</div>
<div style="position:absolute;left:287.49px;top:534.76px;height:7.68px;line-height:7.68px;font-size:6.4px;color:#4a4a4a;white-space:nowrap;transform:translateX(-50%);-webkit-text-stroke:0.12px #4a4a4a">Mar</div>
<div style="position:absolute;left:302.51px;top:534.76px;height:7.68px;line-height:7.68px;font-size:6.4px;color:#4a4a4a;white-space:nowrap;transform:translateX(-50%);-webkit-text-stroke:0.12px #4a4a4a">Apr</div>
<div style="position:absolute;left:317.53px;top:534.76px;height:7.68px;line-height:7.68px;font-size:6.4px;color:#4a4a4a;white-space:nowrap;transform:translateX(-50%);-webkit-text-stroke:0.12px #4a4a4a">May</div>
<div style="position:absolute;left:332.55px;top:534.76px;height:7.68px;line-height:7.68px;font-size:6.4px;color:#4a4a4a;white-space:nowrap;transform:translateX(-50%);-webkit-text-stroke:0.12px #4a4a4a">Jun</div>
<div style="position:absolute;left:347.57px;top:534.76px;height:7.68px;line-height:7.68px;font-size:6.4px;color:#4a4a4a;white-space:nowrap;transform:translateX(-50%);-webkit-text-stroke:0.12px #4a4a4a">Jul</div>
<div style="position:absolute;left:362.59px;top:534.76px;height:7.68px;line-height:7.68px;font-size:6.4px;color:#4a4a4a;white-space:nowrap;transform:translateX(-50%);-webkit-text-stroke:0.12px #4a4a4a">Aug</div>
<div style="position:absolute;left:377.61px;top:534.76px;height:7.68px;line-height:7.68px;font-size:6.4px;color:#4a4a4a;white-space:nowrap;transform:translateX(-50%);-webkit-text-stroke:0.12px #4a4a4a">Sep</div>
<div style="position:absolute;left:392.63px;top:534.76px;height:7.68px;line-height:7.68px;font-size:6.4px;color:#4a4a4a;white-space:nowrap;transform:translateX(-50%);-webkit-text-stroke:0.12px #4a4a4a">Oct</div>
<div style="position:absolute;left:407.65px;top:534.76px;height:7.68px;line-height:7.68px;font-size:6.4px;color:#4a4a4a;white-space:nowrap;transform:translateX(-50%);-webkit-text-stroke:0.12px #4a4a4a">Nov</div>
<div style="position:absolute;left:422.67px;top:534.76px;height:7.68px;line-height:7.68px;font-size:6.4px;color:#4a4a4a;white-space:nowrap;transform:translateX(-50%);-webkit-text-stroke:0.12px #4a4a4a">Dec</div>
<div style="position:absolute;left:437.69px;top:534.76px;height:7.68px;line-height:7.68px;font-size:6.4px;color:#4a4a4a;white-space:nowrap;transform:translateX(-50%);-webkit-text-stroke:0.12px #4a4a4a">Jan</div>
<div style="position:absolute;left:452.71px;top:534.76px;height:7.68px;line-height:7.68px;font-size:6.4px;color:#4a4a4a;white-space:nowrap;transform:translateX(-50%);-webkit-text-stroke:0.12px #4a4a4a">Feb</div>
<div style="position:absolute;left:467.73px;top:534.76px;height:7.68px;line-height:7.68px;font-size:6.4px;color:#4a4a4a;white-space:nowrap;transform:translateX(-50%);-webkit-text-stroke:0.12px #4a4a4a">Mar</div>
<div style="position:absolute;left:482.75px;top:534.76px;height:7.68px;line-height:7.68px;font-size:6.4px;color:#4a4a4a;white-space:nowrap;transform:translateX(-50%);-webkit-text-stroke:0.12px #4a4a4a">Apr</div>
<div style="position:absolute;left:497.77px;top:534.76px;height:7.68px;line-height:7.68px;font-size:6.4px;color:#4a4a4a;white-space:nowrap;transform:translateX(-50%);-webkit-text-stroke:0.12px #4a4a4a">May</div>
<div style="position:absolute;left:512.79px;top:534.76px;height:7.68px;line-height:7.68px;font-size:6.4px;color:#4a4a4a;white-space:nowrap;transform:translateX(-50%);-webkit-text-stroke:0.12px #4a4a4a">Jun</div>
<div style="position:absolute;left:527.81px;top:534.76px;height:7.68px;line-height:7.68px;font-size:6.4px;color:#4a4a4a;white-space:nowrap;transform:translateX(-50%);-webkit-text-stroke:0.12px #4a4a4a">Jul</div>
<div style="position:absolute;left:542.83px;top:534.76px;height:7.68px;line-height:7.68px;font-size:6.4px;color:#4a4a4a;white-space:nowrap;transform:translateX(-50%);-webkit-text-stroke:0.12px #4a4a4a">Aug</div>
<div style="position:absolute;left:557.85px;top:534.76px;height:7.68px;line-height:7.68px;font-size:6.4px;color:#4a4a4a;white-space:nowrap;transform:translateX(-50%);-webkit-text-stroke:0.12px #4a4a4a">Sep</div>
<div style="position:absolute;left:572.87px;top:534.76px;height:7.68px;line-height:7.68px;font-size:6.4px;color:#4a4a4a;white-space:nowrap;transform:translateX(-50%);-webkit-text-stroke:0.12px #4a4a4a">Oct</div>
<div style="position:absolute;left:587.89px;top:534.76px;height:7.68px;line-height:7.68px;font-size:6.4px;color:#4a4a4a;white-space:nowrap;transform:translateX(-50%);-webkit-text-stroke:0.12px #4a4a4a">Nov</div>
<div style="position:absolute;left:602.91px;top:534.76px;height:7.68px;line-height:7.68px;font-size:6.4px;color:#4a4a4a;white-space:nowrap;transform:translateX(-50%);-webkit-text-stroke:0.12px #4a4a4a">Dec</div>
<div style="position:absolute;left:617.93px;top:534.76px;height:7.68px;line-height:7.68px;font-size:6.4px;color:#4a4a4a;white-space:nowrap;transform:translateX(-50%);-webkit-text-stroke:0.12px #4a4a4a">Jan</div>
<div style="position:absolute;left:632.95px;top:534.76px;height:7.68px;line-height:7.68px;font-size:6.4px;color:#4a4a4a;white-space:nowrap;transform:translateX(-50%);-webkit-text-stroke:0.12px #4a4a4a">Feb</div>
<div style="position:absolute;left:647.97px;top:534.76px;height:7.68px;line-height:7.68px;font-size:6.4px;color:#4a4a4a;white-space:nowrap;transform:translateX(-50%);-webkit-text-stroke:0.12px #4a4a4a">Mar</div>
<div style="position:absolute;left:662.99px;top:534.76px;height:7.68px;line-height:7.68px;font-size:6.4px;color:#4a4a4a;white-space:nowrap;transform:translateX(-50%);-webkit-text-stroke:0.12px #4a4a4a">Apr</div>
<div style="position:absolute;left:678.01px;top:534.76px;height:7.68px;line-height:7.68px;font-size:6.4px;color:#4a4a4a;white-space:nowrap;transform:translateX(-50%);-webkit-text-stroke:0.12px #4a4a4a">May</div>
<div style="position:absolute;left:693.03px;top:534.76px;height:7.68px;line-height:7.68px;font-size:6.4px;color:#4a4a4a;white-space:nowrap;transform:translateX(-50%);-webkit-text-stroke:0.12px #4a4a4a">Jun</div>
<div style="position:absolute;left:708.05px;top:534.76px;height:7.68px;line-height:7.68px;font-size:6.4px;color:#4a4a4a;white-space:nowrap;transform:translateX(-50%);-webkit-text-stroke:0.12px #4a4a4a">Jul</div>
<div style="position:absolute;left:723.07px;top:534.76px;height:7.68px;line-height:7.68px;font-size:6.4px;color:#4a4a4a;white-space:nowrap;transform:translateX(-50%);-webkit-text-stroke:0.12px #4a4a4a">Aug</div>
<div style="position:absolute;left:738.09px;top:534.76px;height:7.68px;line-height:7.68px;font-size:6.4px;color:#4a4a4a;white-space:nowrap;transform:translateX(-50%);-webkit-text-stroke:0.12px #4a4a4a">Sep</div>
<div style="position:absolute;left:753.11px;top:534.76px;height:7.68px;line-height:7.68px;font-size:6.4px;color:#4a4a4a;white-space:nowrap;transform:translateX(-50%);-webkit-text-stroke:0.12px #4a4a4a">Oct</div>
<div style="position:absolute;left:768.13px;top:534.76px;height:7.68px;line-height:7.68px;font-size:6.4px;color:#4a4a4a;white-space:nowrap;transform:translateX(-50%);-webkit-text-stroke:0.12px #4a4a4a">Nov</div>
<div style="position:absolute;left:783.15px;top:534.76px;height:7.68px;line-height:7.68px;font-size:6.4px;color:#4a4a4a;white-space:nowrap;transform:translateX(-50%);-webkit-text-stroke:0.12px #4a4a4a">Dec</div>
<div style="position:absolute;left:798.17px;top:534.76px;height:7.68px;line-height:7.68px;font-size:6.4px;color:#4a4a4a;white-space:nowrap;transform:translateX(-50%);-webkit-text-stroke:0.12px #4a4a4a">Jan</div>
<div style="position:absolute;left:813.19px;top:534.76px;height:7.68px;line-height:7.68px;font-size:6.4px;color:#4a4a4a;white-space:nowrap;transform:translateX(-50%);-webkit-text-stroke:0.12px #4a4a4a">Feb</div>
<div style="position:absolute;left:828.21px;top:534.76px;height:7.68px;line-height:7.68px;font-size:6.4px;color:#4a4a4a;white-space:nowrap;transform:translateX(-50%);-webkit-text-stroke:0.12px #4a4a4a">Mar</div>
<div style="position:absolute;left:843.23px;top:534.76px;height:7.68px;line-height:7.68px;font-size:6.4px;color:#4a4a4a;white-space:nowrap;transform:translateX(-50%);-webkit-text-stroke:0.12px #4a4a4a">Apr</div>
<div style="position:absolute;left:858.25px;top:534.76px;height:7.68px;line-height:7.68px;font-size:6.4px;color:#4a4a4a;white-space:nowrap;transform:translateX(-50%);-webkit-text-stroke:0.12px #4a4a4a">May</div>
<div style="position:absolute;left:873.27px;top:534.76px;height:7.68px;line-height:7.68px;font-size:6.4px;color:#4a4a4a;white-space:nowrap;transform:translateX(-50%);-webkit-text-stroke:0.12px #4a4a4a">Jun</div>
<div style="position:absolute;left:888.29px;top:534.76px;height:7.68px;line-height:7.68px;font-size:6.4px;color:#4a4a4a;white-space:nowrap;transform:translateX(-50%);-webkit-text-stroke:0.12px #4a4a4a">Jul</div>
<div style="position:absolute;left:903.31px;top:534.76px;height:7.68px;line-height:7.68px;font-size:6.4px;color:#4a4a4a;white-space:nowrap;transform:translateX(-50%);-webkit-text-stroke:0.12px #4a4a4a">Aug</div>
<div style="position:absolute;left:918.33px;top:534.76px;height:7.68px;line-height:7.68px;font-size:6.4px;color:#4a4a4a;white-space:nowrap;transform:translateX(-50%);-webkit-text-stroke:0.12px #4a4a4a">Sep</div>
<div style="position:absolute;left:933.35px;top:534.76px;height:7.68px;line-height:7.68px;font-size:6.4px;color:#4a4a4a;white-space:nowrap;transform:translateX(-50%);-webkit-text-stroke:0.12px #4a4a4a">Oct</div>
<div style="position:absolute;left:948.37px;top:534.76px;height:7.68px;line-height:7.68px;font-size:6.4px;color:#4a4a4a;white-space:nowrap;transform:translateX(-50%);-webkit-text-stroke:0.12px #4a4a4a">Nov</div>
<div style="position:absolute;left:963.39px;top:534.76px;height:7.68px;line-height:7.68px;font-size:6.4px;color:#4a4a4a;white-space:nowrap;transform:translateX(-50%);-webkit-text-stroke:0.12px #4a4a4a">Dec</div>
<div style="position:absolute;left:0.00px;top:559.00px;width:1000.00px;height:19.00px;background:#e9eaed"></div>
<div style="position:absolute;left:0.00px;top:559.00px;width:1000.00px;height:0.80px;background:#dadada"></div>
<svg style="position:absolute;left:16px;top:566px" width="5" height="8"><path d="M4 0.5 L0.8 4 L4 7.5" fill="none" stroke="#555" stroke-width="1"/></svg>
<svg style="position:absolute;left:38px;top:566px" width="5" height="8"><path d="M1 0.5 L4.2 4 L1 7.5" fill="none" stroke="#555" stroke-width="1"/></svg>
<div style="position:absolute;left:56.50px;top:569.00px;width:1.80px;height:1.80px;background:#333"></div>
<div style="position:absolute;left:59.50px;top:569.00px;width:1.80px;height:1.80px;background:#333"></div>
<div style="position:absolute;left:62.50px;top:569.00px;width:1.80px;height:1.80px;background:#333"></div>
<div style="position:absolute;left:80.00px;top:564.93px;height:10.74px;line-height:10.74px;font-size:8.95px;color:#222;white-space:nowrap;-webkit-text-stroke:0.15px #222">Statements Summary 2044</div>
<div style="position:absolute;left:200.70px;top:561.50px;width:61.30px;height:15.00px;background:#fafa88"></div>
<div style="position:absolute;left:206.80px;top:565.32px;height:9.96px;line-height:9.96px;font-size:8.3px;color:#222;white-space:nowrap;-webkit-text-stroke:0.15px #222">CAPEX 2044</div>
<div style="position:absolute;left:268.70px;top:561.50px;width:54.40px;height:15.00px;background:#fafa88"></div>
<div style="position:absolute;left:273.80px;top:565.32px;height:9.96px;line-height:9.96px;font-size:8.3px;color:#222;white-space:nowrap;-webkit-text-stroke:0.15px #222">OPEX 2044</div>
<div style="position:absolute;left:336.30px;top:565.14px;height:10.32px;line-height:10.32px;font-size:8.6px;color:#222;white-space:nowrap;-webkit-text-stroke:0.15px #222">Key Metrics Charts</div>
<div style="position:absolute;left:429.50px;top:565.14px;height:10.32px;line-height:10.32px;font-size:8.6px;color:#222;white-space:nowrap;-webkit-text-stroke:0.15px #222">Sales Summary Charts</div>
<div style="position:absolute;left:531.00px;top:559.50px;width:52.00px;height:18.50px;background:#fff"></div>
<div style="position:absolute;left:536.00px;top:562.62px;height:9.96px;line-height:9.96px;font-size:8.3px;color:#1a1a1a;white-space:nowrap;font-weight:bold;">KPI Charts</div>
<div style="position:absolute;left:536.00px;top:574.60px;width:42.50px;height:1.30px;background:#1f7a5a"></div>
<div style="position:absolute;left:583.00px;top:559.80px;width:35.00px;height:18.00px;background:#e2e2e4"></div>
<div style="position:absolute;left:593.80px;top:566.02px;height:9.96px;line-height:9.96px;font-size:8.3px;color:#222;white-space:nowrap;-webkit-text-stroke:0.15px #222">BEA</div>
<div style="position:absolute;left:620.00px;top:561.50px;width:48.00px;height:15.00px;background:#fafa88"></div>
<div style="position:absolute;left:627.20px;top:565.82px;height:9.96px;line-height:9.96px;font-size:8.3px;color:#222;white-space:nowrap;-webkit-text-stroke:0.15px #222">Expenses</div>
<div style="position:absolute;left:675.20px;top:561.50px;width:88.80px;height:15.00px;background:#fafa88"></div>
<div style="position:absolute;left:680.80px;top:565.07px;height:10.46px;line-height:10.46px;font-size:8.72px;color:#222;white-space:nowrap;-webkit-text-stroke:0.15px #222">COGS Assumptions</div>
<div style="position:absolute;left:770.00px;top:561.50px;width:98.00px;height:15.00px;background:#fafa88"></div>
<div style="position:absolute;left:776.80px;top:565.03px;height:10.54px;line-height:10.54px;font-size:8.78px;color:#222;white-space:nowrap;-webkit-text-stroke:0.15px #222">Salaries Assumptions</div>
<div style="position:absolute;left:887.00px;top:568.20px;width:1.80px;height:1.80px;background:#333"></div>
<div style="position:absolute;left:890.00px;top:568.20px;width:1.80px;height:1.80px;background:#333"></div>
<div style="position:absolute;left:893.00px;top:568.20px;width:1.80px;height:1.80px;background:#333"></div>
<div style="position:absolute;left:906.50px;top:568.30px;width:8.00px;height:1.10px;background:#333"></div>
<div style="position:absolute;left:910.00px;top:564.80px;width:1.10px;height:8.00px;background:#333"></div>
<div style="position:absolute;left:931.30px;top:566.00px;width:1.50px;height:1.50px;background:#444"></div>
<div style="position:absolute;left:931.30px;top:569.00px;width:1.50px;height:1.50px;background:#444"></div>
<div style="position:absolute;left:931.30px;top:572.00px;width:1.50px;height:1.50px;background:#444"></div>
<svg style="position:absolute;left:945px;top:566.5px" width="5" height="7"><path d="M4.5 0.5 L0.5 3.5 L4.5 6.5 Z" fill="#555"/></svg>
<div style="position:absolute;left:954.00px;top:566.80px;width:20.00px;height:6.50px;background:#6b6b6b;border-radius:3px"></div>
<svg style="position:absolute;left:981px;top:566.5px" width="5" height="7"><path d="M0.5 0.5 L4.5 3.5 L0.5 6.5 Z" fill="#555"/></svg>
<div style="position:absolute;left:0.00px;top:578.00px;width:1000.00px;height:16.00px;background:#f3f3f3"></div>
<div style="position:absolute;left:7.50px;top:584.04px;height:7.92px;line-height:7.92px;font-size:6.6px;color:#444;white-space:nowrap;">Ready</div>
<svg style="position:absolute;left:39px;top:583px" width="10" height="10" viewBox="0 0 10 10">
<rect x="0.5" y="0.5" width="9" height="8" fill="none" stroke="#555" stroke-width="1"/>
<line x1="0.5" y1="3" x2="9.5" y2="3" stroke="#555" stroke-width="1"/>
<circle cx="6.5" cy="6.3" r="1.8" fill="#555"/>
</svg>
<svg style="position:absolute;left:60px;top:582.5px" width="11" height="11" viewBox="0 0 11 11">
<circle cx="4" cy="1.6" r="1.2" fill="#444"/>
<path d="M0.5 3.5 L8 3.5 M4 3.5 L4 6 L2 10 M4 6 L6 10" fill="none" stroke="#444" stroke-width="1"/>
<circle cx="8" cy="8" r="2" fill="none" stroke="#444" stroke-width="0.9"/>
</svg>
<div style="position:absolute;left:72.00px;top:584.01px;height:7.98px;line-height:7.98px;font-size:6.65px;color:#222;white-space:nowrap;font-weight:bold;">Accessibility: Investigate</div>
<div style="position:absolute;left:806.00px;top:579.00px;width:26.00px;height:15.00px;background:#e4e4e4"></div>
<svg style="position:absolute;left:814px;top:582.5px" width="10" height="9" viewBox="0 0 10 9">
<rect x="0.5" y="0.5" width="9" height="8" fill="none" stroke="#444" stroke-width="1"/>
<path d="M3.5 0.5 V8.5 M6.5 0.5 V8.5 M0.5 3.2 H9.5 M0.5 5.8 H9.5" stroke="#444" stroke-width="0.8"/>
</svg>
<svg style="position:absolute;left:840px;top:582.5px" width="10" height="9" viewBox="0 0 10 9">
<rect x="0.5" y="0.5" width="9" height="8" fill="none" stroke="#444" stroke-width="1"/>
<path d="M2 0.5 V8.5 M3.7 0.5 V8.5 M5.4 0.5 V8.5 M7.1 0.5 V8.5" stroke="#555" stroke-width="0.9"/>
</svg>
<svg style="position:absolute;left:866px;top:582.5px" width="10" height="9" viewBox="0 0 10 9">
<path d="M0.5 0.5 H9.5 V8.5 M0.5 0.5 V8.5 H5.5 V4.5 H9.5" fill="none" stroke="#444" stroke-width="1"/>
</svg>
<div style="position:absolute;left:888.00px;top:587.50px;width:5.00px;height:0.90px;background:#888"></div>
<div style="position:absolute;left:897.00px;top:587.50px;width:65.00px;height:0.80px;background:#a0a0a0"></div>
<div style="position:absolute;left:927.50px;top:584.00px;width:2.50px;height:7.00px;background:#444"></div>
<div style="position:absolute;left:964.50px;top:587.50px;width:5.00px;height:0.90px;background:#888"></div>
<div style="position:absolute;left:966.60px;top:585.40px;width:0.90px;height:5.00px;background:#888"></div>
<div style="position:absolute;left:978.50px;top:584.22px;height:7.56px;line-height:7.56px;font-size:6.3px;color:#555;white-space:nowrap;">100%</div>
</div></body></html>
